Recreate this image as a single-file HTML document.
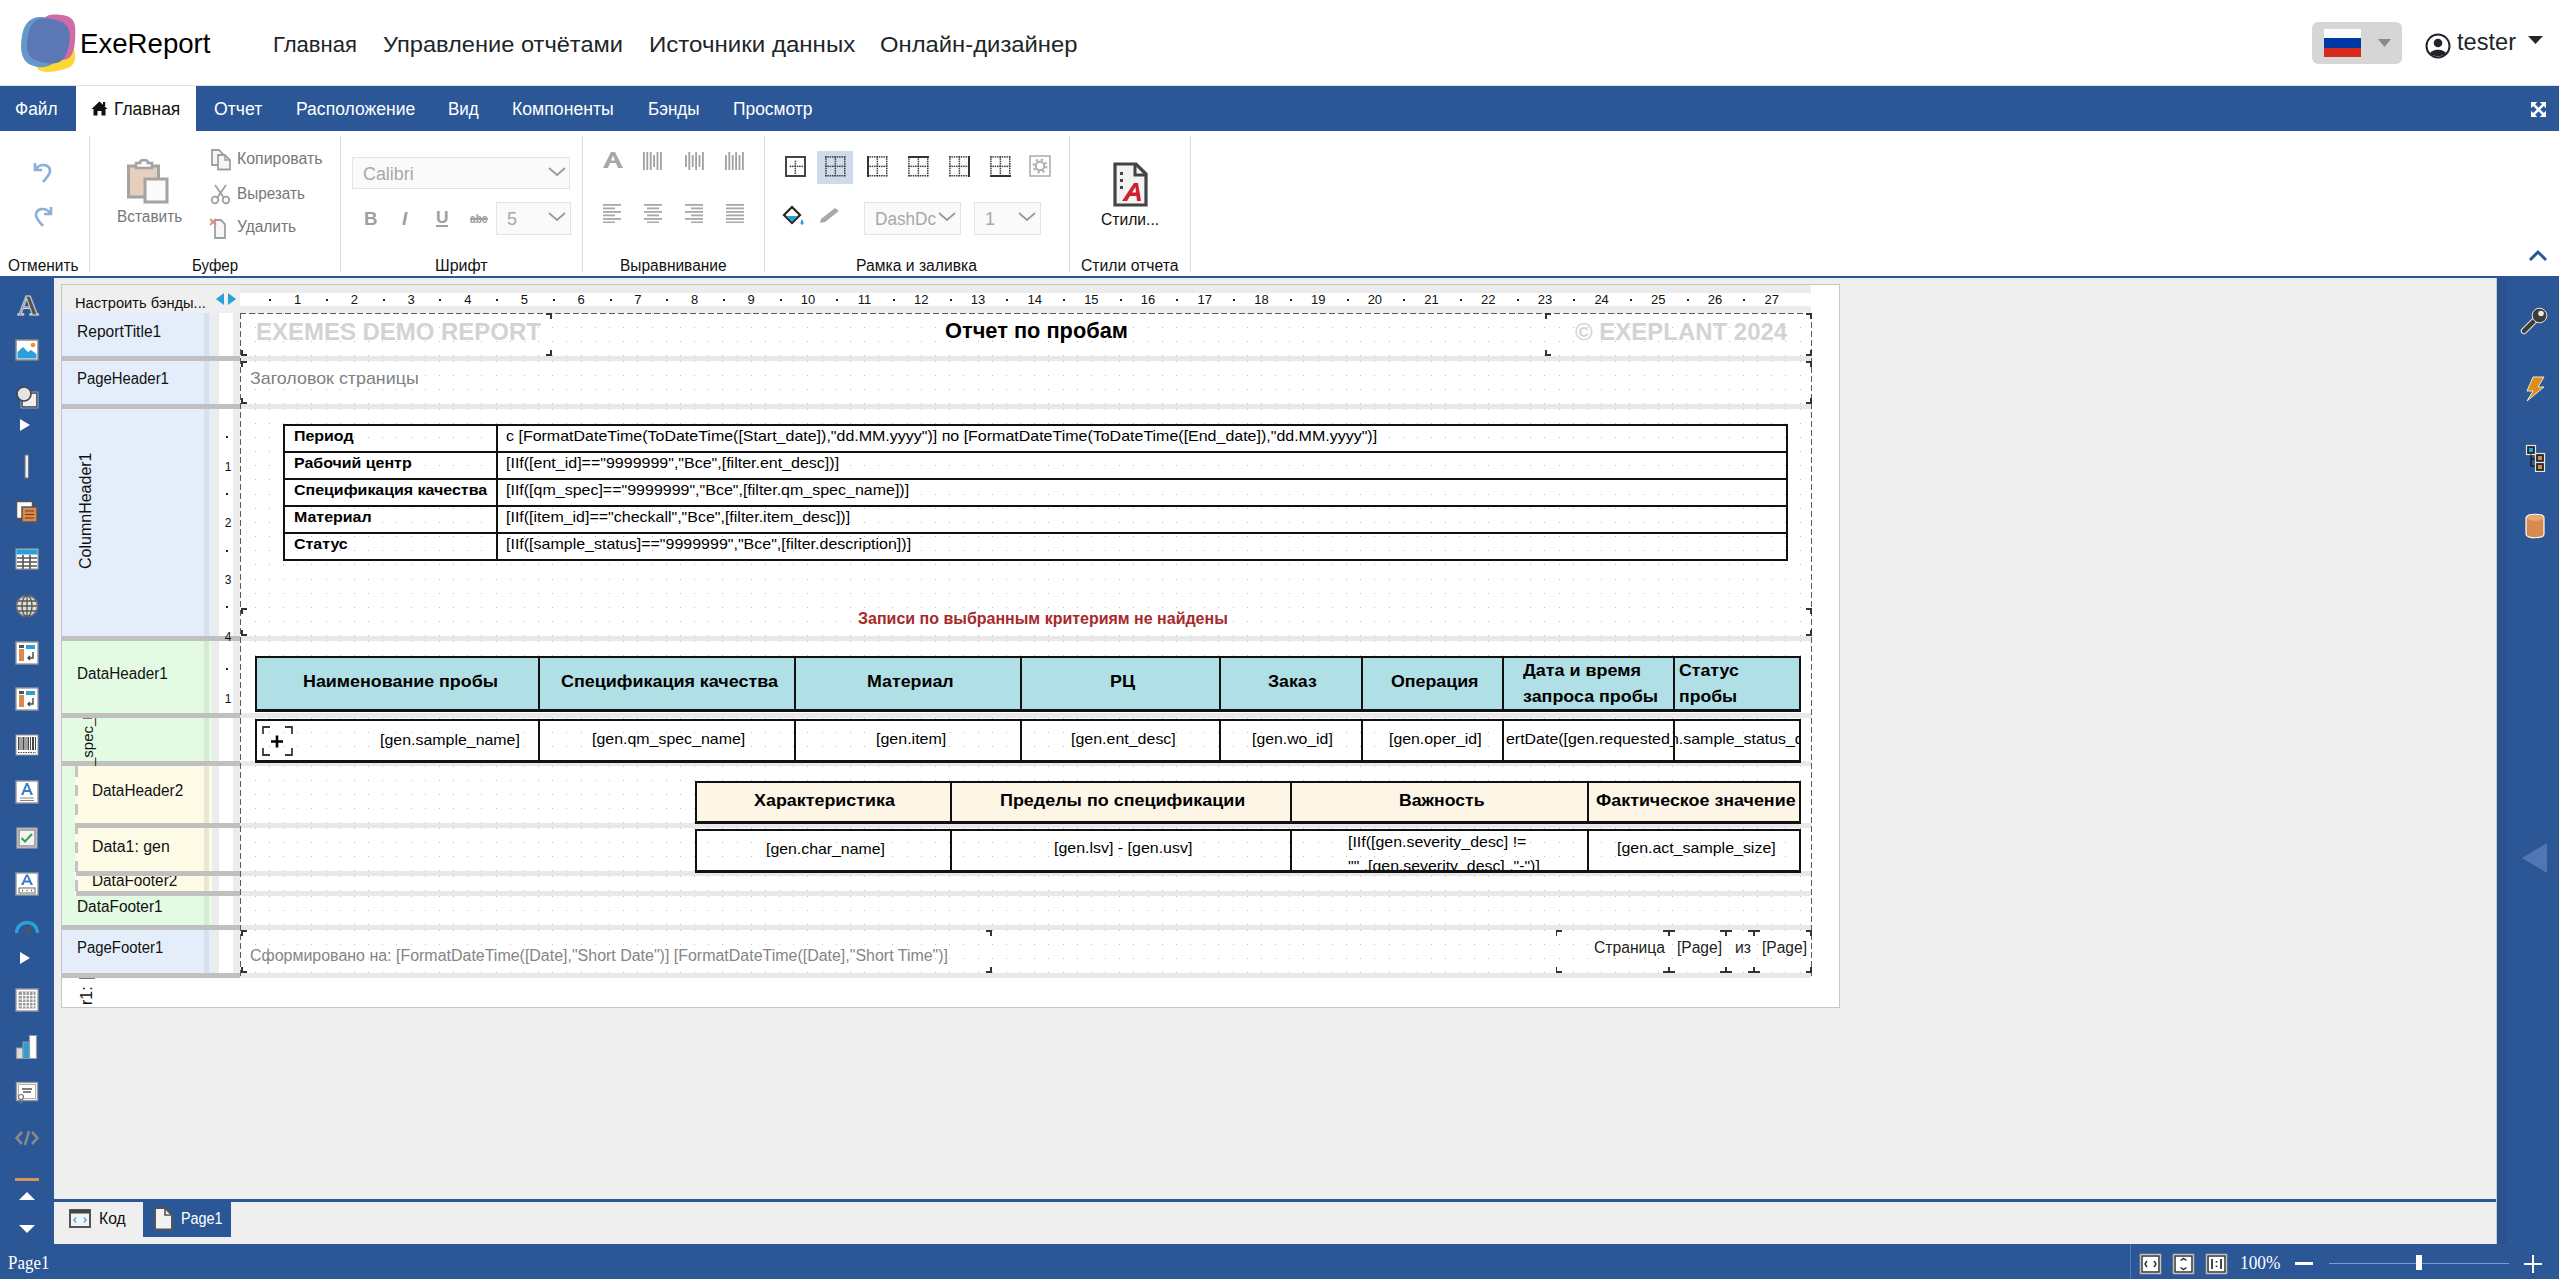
<!DOCTYPE html>
<html><head><meta charset="utf-8"><title>ExeReport</title>
<style>
html,body{margin:0;padding:0}
body{width:2559px;height:1279px;position:relative;overflow:hidden;background:#efefef;font-family:"Liberation Sans",sans-serif}
.t{position:absolute;white-space:nowrap;line-height:1;transform-origin:0 0;display:inline-block}
.rn{color:#111;font-family:"Liberation Sans",sans-serif}
</style></head><body>
<div style="position:absolute;left:0px;top:0px;width:2559px;height:85px;background:#fff"></div>
<div style="position:absolute;left:0px;top:85px;width:2559px;height:1px;background:#dee2e6"></div>
<svg style="position:absolute;left:15px;top:10px;" width="70" height="65" viewBox="0 0 70 65">
<g transform="rotate(-10 40 45)"><path d="M39.00 26.00 C55.80 26.00 60.00 29.50 60.00 43.50 C60.00 57.50 55.80 61.00 39.00 61.00 C22.20 61.00 18.00 57.50 18.00 43.50 C18.00 29.50 22.20 26.00 39.00 26.00Z" fill="#fdd835"/></g>
<g transform="rotate(4 40 30)"><path d="M42.00 4.50 C56.40 4.50 60.00 9.05 60.00 27.25 C60.00 45.45 56.40 50.00 42.00 50.00 C27.60 50.00 24.00 45.45 24.00 27.25 C24.00 9.05 27.60 4.50 42.00 4.50Z" fill="#d16ba5"/></g>
<path d="M41.00 26.00 C56.20 26.00 60.00 28.40 60.00 38.00 C60.00 47.60 56.20 50.00 41.00 50.00 C25.80 50.00 22.00 47.60 22.00 38.00 C22.00 28.40 25.80 26.00 41.00 26.00Z" fill="#d0677f" opacity="0"/>
<g transform="rotate(6 25 30)"><path d="M26.25 7.00 C39.68 7.00 46.00 15.00 46.00 32.00 C46.00 49.00 39.68 57.00 26.25 57.00 C12.82 57.00 6.50 49.00 6.50 32.00 C6.50 15.00 12.82 7.00 26.25 7.00Z" fill="#6497cb"/></g>
<g transform="rotate(10 33 30)"><path d="M33.50 8.50 C49.04 8.50 54.50 14.29 54.50 30.75 C54.50 47.22 49.04 53.00 33.50 53.00 C17.96 53.00 12.50 47.22 12.50 30.75 C12.50 14.29 17.96 8.50 33.50 8.50Z" fill="#5b77b4"/></g>
</svg>
<span id="t1" class="t" style="left:80px;top:29.90px;font-size:28px;color:#000;font-weight:400;font-family:'Liberation Sans', sans-serif;transform:scaleX(0.9864);">ExeReport</span>
<span id="t2" class="t" style="left:273px;top:34.38px;font-size:22px;color:#212529;font-weight:400;font-family:'Liberation Sans', sans-serif;transform:scaleX(1.0030);">Главная</span>
<span id="t3" class="t" style="left:382.5px;top:34.38px;font-size:22px;color:#212529;font-weight:400;font-family:'Liberation Sans', sans-serif;transform:scaleX(1.0742);">Управление отчётами</span>
<span id="t4" class="t" style="left:648.75px;top:34.38px;font-size:22px;color:#212529;font-weight:400;font-family:'Liberation Sans', sans-serif;transform:scaleX(1.0941);">Источники данных</span>
<span id="t5" class="t" style="left:880px;top:34.38px;font-size:22px;color:#212529;font-weight:400;font-family:'Liberation Sans', sans-serif;transform:scaleX(1.0824);">Онлайн-дизайнер</span>
<div style="position:absolute;left:2312px;top:22px;width:90px;height:42px;background:#d6d6d6;border-radius:6px"></div>
<div style="position:absolute;left:2324px;top:29px;width:37px;height:9px;background:#fff"></div>
<div style="position:absolute;left:2324px;top:38px;width:37px;height:10px;background:#0039a6"></div>
<div style="position:absolute;left:2324px;top:48px;width:37px;height:9px;background:#d52b1e"></div>
<svg style="position:absolute;left:2378px;top:39px;" width="14" height="9" viewBox="0 0 14 9"><path d="M0 0 L13 0 L6.5 8Z" fill="#8a8a8a"/></svg>
<svg style="position:absolute;left:2425px;top:33px;" width="26" height="26" viewBox="0 0 26 26"><circle cx="13" cy="13" r="11.5" fill="none" stroke="#212529" stroke-width="2"/><circle cx="13" cy="10" r="4.3" fill="#212529"/><path d="M5 20.5 C7 15.5 19 15.5 21 20.5 C18 24 8 24 5 20.5Z" fill="#212529"/></svg>
<span id="t6" class="t" style="left:2457.4px;top:30.18px;font-size:24px;color:#212529;font-weight:400;font-family:'Liberation Sans', sans-serif;transform:scaleX(0.9828);">tester</span>
<svg style="position:absolute;left:2528px;top:36px;" width="16" height="9" viewBox="0 0 16 9"><path d="M0 0 L15 0 L7.5 8Z" fill="#212529"/></svg>
<div style="position:absolute;left:0px;top:86px;width:2559px;height:45px;background:#2b5797"></div>
<div style="position:absolute;left:76px;top:86px;width:120px;height:45px;background:#fff"></div>
<span id="t7" class="t" style="left:15px;top:99.76px;font-size:18px;color:#fff;font-weight:400;font-family:'Liberation Sans', sans-serif;transform:scaleX(0.9601);">Файл</span>
<svg style="position:absolute;left:91px;top:101px;" width="17" height="15" viewBox="0 0 17 15"><path d="M8.5 0.5 L0.5 8 L2.5 8 L2.5 14.5 L6.5 14.5 L6.5 10 L10.5 10 L10.5 14.5 L14.5 14.5 L14.5 8 L16.5 8Z" fill="#111"/><rect x="12" y="1" width="2.2" height="4" fill="#111"/></svg>
<span id="t8" class="t" style="left:113.75px;top:99.76px;font-size:18px;color:#111;font-weight:400;font-family:'Liberation Sans', sans-serif;transform:scaleX(0.9669);">Главная</span>
<span id="t9" class="t" style="left:213.75px;top:99.76px;font-size:18px;color:#fff;font-weight:400;font-family:'Liberation Sans', sans-serif;transform:scaleX(0.9791);">Отчет</span>
<span id="t10" class="t" style="left:295.75px;top:99.76px;font-size:18px;color:#fff;font-weight:400;font-family:'Liberation Sans', sans-serif;transform:scaleX(0.9746);">Расположение</span>
<span id="t11" class="t" style="left:448px;top:99.76px;font-size:18px;color:#fff;font-weight:400;font-family:'Liberation Sans', sans-serif;transform:scaleX(0.9439);">Вид</span>
<span id="t12" class="t" style="left:512px;top:99.76px;font-size:18px;color:#fff;font-weight:400;font-family:'Liberation Sans', sans-serif;transform:scaleX(0.9812);">Компоненты</span>
<span id="t13" class="t" style="left:647.5px;top:99.76px;font-size:18px;color:#fff;font-weight:400;font-family:'Liberation Sans', sans-serif;transform:scaleX(0.9469);">Бэнды</span>
<span id="t14" class="t" style="left:732.5px;top:99.76px;font-size:18px;color:#fff;font-weight:400;font-family:'Liberation Sans', sans-serif;transform:scaleX(0.9669);">Просмотр</span>
<svg style="position:absolute;left:2531px;top:102px;" width="15" height="15" viewBox="0 0 15 15"><g fill="#fff"><path d="M0 0 L6.3 0 L0 6.3Z"/><path d="M15 0 L8.7 0 L15 6.3Z"/><path d="M0 15 L6.3 15 L0 8.7Z"/><path d="M15 15 L8.7 15 L15 8.7Z"/></g><path d="M2 2 L13 13 M13 2 L2 13" stroke="#fff" stroke-width="2.6"/></svg>
<div style="position:absolute;left:0px;top:131px;width:2559px;height:146px;background:#fff"></div>
<div style="position:absolute;left:0px;top:276px;width:2559px;height:2px;background:#2b5797"></div>
<div style="position:absolute;left:89px;top:136px;width:1px;height:136px;background:#dcdcdc"></div>
<div style="position:absolute;left:340px;top:136px;width:1px;height:136px;background:#dcdcdc"></div>
<div style="position:absolute;left:582px;top:136px;width:1px;height:136px;background:#dcdcdc"></div>
<div style="position:absolute;left:764px;top:136px;width:1px;height:136px;background:#dcdcdc"></div>
<div style="position:absolute;left:1069px;top:136px;width:1px;height:136px;background:#dcdcdc"></div>
<div style="position:absolute;left:1190px;top:136px;width:1px;height:136px;background:#dcdcdc"></div>
<span id="t15" class="t" style="left:7.5px;top:258.26px;font-size:16px;color:#111;font-weight:400;font-family:'Liberation Sans', sans-serif;transform:scaleX(0.9643);">Отменить</span>
<span id="t16" class="t" style="left:192px;top:258.26px;font-size:16px;color:#111;font-weight:400;font-family:'Liberation Sans', sans-serif;transform:scaleX(0.9400);">Буфер</span>
<span id="t17" class="t" style="left:435px;top:258.26px;font-size:16px;color:#111;font-weight:400;font-family:'Liberation Sans', sans-serif;transform:scaleX(1.0011);">Шрифт</span>
<span id="t18" class="t" style="left:620px;top:258.26px;font-size:16px;color:#111;font-weight:400;font-family:'Liberation Sans', sans-serif;transform:scaleX(0.9679);">Выравнивание</span>
<span id="t19" class="t" style="left:856px;top:258.26px;font-size:16px;color:#111;font-weight:400;font-family:'Liberation Sans', sans-serif;transform:scaleX(0.9807);">Рамка и заливка</span>
<span id="t20" class="t" style="left:1081px;top:258.26px;font-size:16px;color:#111;font-weight:400;font-family:'Liberation Sans', sans-serif;transform:scaleX(0.9831);">Стили отчета</span>
<svg style="position:absolute;left:2528px;top:249px;" width="20" height="14" viewBox="0 0 20 14"><path d="M2 11 L10 3 L18 11" fill="none" stroke="#2b5797" stroke-width="3"/></svg>
<svg style="position:absolute;left:32px;top:160px;" width="22" height="24" viewBox="0 0 22 24"><path d="M3 3 L3 10 L10 10" fill="none" stroke="#8ab0d6" stroke-width="2.6"/><path d="M4 9 C8 3 18 4 18 11 C18 15 14 18 11 22" fill="none" stroke="#8ab0d6" stroke-width="2.6"/></svg>
<svg style="position:absolute;left:32px;top:204px;" width="22" height="25" viewBox="0 0 22 25"><path d="M19 3 L19 10 L12 10" fill="none" stroke="#8ab0d6" stroke-width="2.6"/><path d="M18 9 C14 3 4 4 4 11 C4 15 8 18 11 22" fill="none" stroke="#8ab0d6" stroke-width="2.6"/></svg>
<svg style="position:absolute;left:126px;top:159px;" width="46" height="46" viewBox="0 0 46 46"><rect x="2.5" y="7" width="30" height="31" fill="#e6cfbd" stroke="#a3a3a3" stroke-width="3"/>
<path d="M10 9 L10 4 L14 4 C14 0 22 0 22 4 L26 4 L26 9Z" fill="#fafafa" stroke="#a3a3a3" stroke-width="2.5"/>
<rect x="19" y="20" width="22" height="23" fill="#fafafa" stroke="#a3a3a3" stroke-width="3"/></svg>
<span id="t21" class="t" style="left:116.5px;top:209.06px;font-size:16px;color:#777;font-weight:400;font-family:'Liberation Sans', sans-serif;transform:scaleX(0.9613);">Вставить</span>
<svg style="position:absolute;left:210px;top:148px;" width="24" height="24" viewBox="0 0 24 24"><path d="M2 2 L9 2 L13 6 L13 17 L2 17Z" fill="#f6f6f6" stroke="#a0a0a0" stroke-width="1.8"/><path d="M8 7 L15 7 L20 12 L20 21.5 L8 21.5Z" fill="#f6f6f6" stroke="#a0a0a0" stroke-width="1.8"/><path d="M15 7 L15 12 L20 12" fill="none" stroke="#a0a0a0" stroke-width="1.6"/></svg>
<span id="t22" class="t" style="left:236.8px;top:151.46px;font-size:16px;color:#777;font-weight:400;font-family:'Liberation Sans', sans-serif;transform:scaleX(0.9935);">Копировать</span>
<svg style="position:absolute;left:210px;top:183px;" width="22" height="22" viewBox="0 0 22 22"><path d="M5 2 L14 15 M16 2 L7 15" stroke="#a0a0a0" stroke-width="1.8" fill="none"/><circle cx="5" cy="17" r="3.3" fill="none" stroke="#a0a0a0" stroke-width="1.8"/><circle cx="16" cy="17" r="3.3" fill="none" stroke="#a0a0a0" stroke-width="1.8"/></svg>
<span id="t23" class="t" style="left:236.8px;top:185.66px;font-size:16px;color:#777;font-weight:400;font-family:'Liberation Sans', sans-serif;transform:scaleX(0.9554);">Вырезать</span>
<svg style="position:absolute;left:208px;top:217px;" width="24" height="24" viewBox="0 0 24 24"><path d="M7 3 L13 3 L17 7 L17 21 L7 21Z" fill="#f6f6f6" stroke="#a0a0a0" stroke-width="1.8"/><path d="M2 2 L8 8 M8 2 L2 8" stroke="#d98c84" stroke-width="1.8"/></svg>
<span id="t24" class="t" style="left:236.8px;top:219.46px;font-size:16px;color:#777;font-weight:400;font-family:'Liberation Sans', sans-serif;transform:scaleX(0.9690);">Удалить</span>
<div style="position:absolute;left:352px;top:157px;width:218px;height:32px;background:#fafafa;border:1px solid #e3e3e3;box-sizing:border-box"></div>
<span id="t25" class="t" style="left:363.4px;top:165.16px;font-size:18px;color:#a8a8a8;font-weight:400;font-family:'Liberation Sans', sans-serif;transform:scaleX(0.9919);">Calibri</span>
<svg style="position:absolute;left:548px;top:166px;" width="18" height="12" viewBox="0 0 18 12"><path d="M1 2 L9 9 L17 2" fill="none" stroke="#9a9a9a" stroke-width="1.8"/></svg>
<div style="position:absolute;left:496px;top:202px;width:75px;height:33px;background:#fafafa;border:1px solid #e3e3e3;box-sizing:border-box"></div>
<span id="t26" class="t" style="left:507px;top:210.26px;font-size:18px;color:#a8a8a8;font-weight:400;font-family:'Liberation Sans', sans-serif;">5</span>
<svg style="position:absolute;left:548px;top:211px;" width="18" height="12" viewBox="0 0 18 12"><path d="M1 2 L9 9 L17 2" fill="none" stroke="#9a9a9a" stroke-width="1.8"/></svg>
<span id="t27" class="t" style="left:363.5px;top:208.92px;font-size:19px;color:#a0a0a0;font-weight:700;font-family:'Liberation Sans', sans-serif;transform:scaleX(0.9829);letter-spacing:0">B</span>
<span id="t28" class="t" style="left:402px;top:208.92px;font-size:19px;color:#a0a0a0;font-weight:700;font-family:'Liberation Sans', sans-serif;font-style:italic">I</span>
<span id="t29" class="t" style="left:435.5px;top:208.61px;font-size:17px;color:#a0a0a0;font-weight:700;font-family:'Liberation Sans', sans-serif;transform:scaleX(1.0178);">U</span>
<div style="position:absolute;left:435.5px;top:225px;width:12px;height:2px;background:#a0a0a0"></div>
<span id="t30" class="t" style="left:470px;top:212.84px;font-size:12px;color:#a0a0a0;font-weight:700;font-family:'Liberation Sans', sans-serif;transform:scaleX(0.8459);">abc</span>
<div style="position:absolute;left:470px;top:218px;width:18px;height:1.5px;background:#a0a0a0"></div>
<svg style="position:absolute;left:602px;top:151px;" width="22" height="18" viewBox="0 0 22 18"><path d="M1 17 L9 1 L13 1 L21 17 L16 17 L14 12 L8 12 L6 17Z M9 9.5 L13 9.5 L11 4.5Z" fill="#a8a8a8"/></svg>
<svg style="position:absolute;left:643px;top:152px;" width="19" height="19" viewBox="0 0 19 19"><rect x="0.0" y="0" width="1.8" height="18" fill="#a0a0a0"/><rect x="3.4" y="0" width="1.8" height="18" fill="#a0a0a0"/><rect x="6.8" y="0" width="1.8" height="18" fill="#a0a0a0"/><rect x="10.2" y="3" width="1.8" height="12" fill="#a0a0a0"/><rect x="13.6" y="0" width="1.8" height="18" fill="#a0a0a0"/><rect x="17.0" y="0" width="1.8" height="18" fill="#a0a0a0"/></svg>
<svg style="position:absolute;left:685px;top:152px;" width="19" height="19" viewBox="0 0 19 19"><rect x="0.0" y="3" width="1.8" height="12" fill="#a0a0a0"/><rect x="3.4" y="0" width="1.8" height="18" fill="#a0a0a0"/><rect x="6.8" y="3" width="1.8" height="12" fill="#a0a0a0"/><rect x="10.2" y="0" width="1.8" height="18" fill="#a0a0a0"/><rect x="13.6" y="3" width="1.8" height="12" fill="#a0a0a0"/><rect x="17.0" y="0" width="1.8" height="18" fill="#a0a0a0"/></svg>
<svg style="position:absolute;left:725px;top:152px;" width="19" height="19" viewBox="0 0 19 19"><rect x="0.0" y="3" width="1.8" height="15" fill="#a0a0a0"/><rect x="3.4" y="0" width="1.8" height="18" fill="#a0a0a0"/><rect x="6.8" y="3" width="1.8" height="15" fill="#a0a0a0"/><rect x="10.2" y="0" width="1.8" height="18" fill="#a0a0a0"/><rect x="13.6" y="3" width="1.8" height="15" fill="#a0a0a0"/><rect x="17.0" y="0" width="1.8" height="18" fill="#a0a0a0"/></svg>
<svg style="position:absolute;left:603px;top:204px;" width="19" height="19" viewBox="0 0 19 19"><rect x="0" y="0.0" width="18" height="1.8" fill="#a8a8a8"/><rect x="0" y="3.5" width="12" height="1.8" fill="#a8a8a8"/><rect x="0" y="7.0" width="18" height="1.8" fill="#a8a8a8"/><rect x="0" y="10.5" width="12" height="1.8" fill="#a8a8a8"/><rect x="0" y="14.0" width="18" height="1.8" fill="#a8a8a8"/><rect x="0" y="17.5" width="12" height="1.8" fill="#a8a8a8"/></svg>
<svg style="position:absolute;left:644px;top:204px;" width="19" height="19" viewBox="0 0 19 19"><rect x="0" y="0.0" width="18" height="1.8" fill="#a8a8a8"/><rect x="3" y="3.5" width="12" height="1.8" fill="#a8a8a8"/><rect x="0" y="7.0" width="18" height="1.8" fill="#a8a8a8"/><rect x="3" y="10.5" width="12" height="1.8" fill="#a8a8a8"/><rect x="0" y="14.0" width="18" height="1.8" fill="#a8a8a8"/><rect x="3" y="17.5" width="12" height="1.8" fill="#a8a8a8"/></svg>
<svg style="position:absolute;left:685px;top:204px;" width="19" height="19" viewBox="0 0 19 19"><rect x="0" y="0.0" width="18" height="1.8" fill="#a8a8a8"/><rect x="6" y="3.5" width="12" height="1.8" fill="#a8a8a8"/><rect x="0" y="7.0" width="18" height="1.8" fill="#a8a8a8"/><rect x="6" y="10.5" width="12" height="1.8" fill="#a8a8a8"/><rect x="0" y="14.0" width="18" height="1.8" fill="#a8a8a8"/><rect x="6" y="17.5" width="12" height="1.8" fill="#a8a8a8"/></svg>
<svg style="position:absolute;left:726px;top:204px;" width="19" height="19" viewBox="0 0 19 19"><rect x="0" y="0.0" width="18" height="1.8" fill="#a8a8a8"/><rect x="0" y="3.5" width="18" height="1.8" fill="#a8a8a8"/><rect x="0" y="7.0" width="18" height="1.8" fill="#a8a8a8"/><rect x="0" y="10.5" width="18" height="1.8" fill="#a8a8a8"/><rect x="0" y="14.0" width="18" height="1.8" fill="#a8a8a8"/><rect x="0" y="17.5" width="18" height="1.8" fill="#a8a8a8"/></svg>
<div style="position:absolute;left:817px;top:151px;width:36px;height:33px;background:#cfdaea"></div>
<svg style="position:absolute;left:784.5px;top:156px;" width="21" height="21" viewBox="0 0 21 21"><rect x="1" y="1" width="19" height="19" fill="none" stroke="#444" stroke-width="2"/><rect x="4.70" y="9.6" width="1.5" height="1.5" fill="#3a3a3a"/><rect x="9.6" y="4.70" width="1.5" height="1.5" fill="#3a3a3a"/><rect x="7.05" y="9.6" width="1.5" height="1.5" fill="#3a3a3a"/><rect x="9.6" y="7.05" width="1.5" height="1.5" fill="#3a3a3a"/><rect x="9.40" y="9.6" width="1.5" height="1.5" fill="#3a3a3a"/><rect x="9.6" y="9.40" width="1.5" height="1.5" fill="#3a3a3a"/><rect x="11.75" y="9.6" width="1.5" height="1.5" fill="#3a3a3a"/><rect x="9.6" y="11.75" width="1.5" height="1.5" fill="#3a3a3a"/><rect x="14.10" y="9.6" width="1.5" height="1.5" fill="#3a3a3a"/><rect x="9.6" y="14.10" width="1.5" height="1.5" fill="#3a3a3a"/><rect x="16.45" y="9.6" width="1.5" height="1.5" fill="#3a3a3a"/><rect x="9.6" y="16.45" width="1.5" height="1.5" fill="#3a3a3a"/></svg>
<svg style="position:absolute;left:824.5px;top:156px;" width="21" height="21" viewBox="0 0 21 21"><rect x="0.00" y="0.20" width="1.5" height="1.5" fill="#3a3a3a"/><rect x="0.20" y="0.00" width="1.5" height="1.5" fill="#3a3a3a"/><rect x="0.00" y="9.60" width="1.5" height="1.5" fill="#3a3a3a"/><rect x="9.60" y="0.00" width="1.5" height="1.5" fill="#3a3a3a"/><rect x="0.00" y="19.00" width="1.5" height="1.5" fill="#3a3a3a"/><rect x="19.00" y="0.00" width="1.5" height="1.5" fill="#3a3a3a"/><rect x="2.35" y="0.20" width="1.5" height="1.5" fill="#3a3a3a"/><rect x="0.20" y="2.35" width="1.5" height="1.5" fill="#3a3a3a"/><rect x="2.35" y="9.60" width="1.5" height="1.5" fill="#3a3a3a"/><rect x="9.60" y="2.35" width="1.5" height="1.5" fill="#3a3a3a"/><rect x="2.35" y="19.00" width="1.5" height="1.5" fill="#3a3a3a"/><rect x="19.00" y="2.35" width="1.5" height="1.5" fill="#3a3a3a"/><rect x="4.70" y="0.20" width="1.5" height="1.5" fill="#3a3a3a"/><rect x="0.20" y="4.70" width="1.5" height="1.5" fill="#3a3a3a"/><rect x="4.70" y="9.60" width="1.5" height="1.5" fill="#3a3a3a"/><rect x="9.60" y="4.70" width="1.5" height="1.5" fill="#3a3a3a"/><rect x="4.70" y="19.00" width="1.5" height="1.5" fill="#3a3a3a"/><rect x="19.00" y="4.70" width="1.5" height="1.5" fill="#3a3a3a"/><rect x="7.05" y="0.20" width="1.5" height="1.5" fill="#3a3a3a"/><rect x="0.20" y="7.05" width="1.5" height="1.5" fill="#3a3a3a"/><rect x="7.05" y="9.60" width="1.5" height="1.5" fill="#3a3a3a"/><rect x="9.60" y="7.05" width="1.5" height="1.5" fill="#3a3a3a"/><rect x="7.05" y="19.00" width="1.5" height="1.5" fill="#3a3a3a"/><rect x="19.00" y="7.05" width="1.5" height="1.5" fill="#3a3a3a"/><rect x="9.40" y="0.20" width="1.5" height="1.5" fill="#3a3a3a"/><rect x="0.20" y="9.40" width="1.5" height="1.5" fill="#3a3a3a"/><rect x="9.40" y="9.60" width="1.5" height="1.5" fill="#3a3a3a"/><rect x="9.60" y="9.40" width="1.5" height="1.5" fill="#3a3a3a"/><rect x="9.40" y="19.00" width="1.5" height="1.5" fill="#3a3a3a"/><rect x="19.00" y="9.40" width="1.5" height="1.5" fill="#3a3a3a"/><rect x="11.75" y="0.20" width="1.5" height="1.5" fill="#3a3a3a"/><rect x="0.20" y="11.75" width="1.5" height="1.5" fill="#3a3a3a"/><rect x="11.75" y="9.60" width="1.5" height="1.5" fill="#3a3a3a"/><rect x="9.60" y="11.75" width="1.5" height="1.5" fill="#3a3a3a"/><rect x="11.75" y="19.00" width="1.5" height="1.5" fill="#3a3a3a"/><rect x="19.00" y="11.75" width="1.5" height="1.5" fill="#3a3a3a"/><rect x="14.10" y="0.20" width="1.5" height="1.5" fill="#3a3a3a"/><rect x="0.20" y="14.10" width="1.5" height="1.5" fill="#3a3a3a"/><rect x="14.10" y="9.60" width="1.5" height="1.5" fill="#3a3a3a"/><rect x="9.60" y="14.10" width="1.5" height="1.5" fill="#3a3a3a"/><rect x="14.10" y="19.00" width="1.5" height="1.5" fill="#3a3a3a"/><rect x="19.00" y="14.10" width="1.5" height="1.5" fill="#3a3a3a"/><rect x="16.45" y="0.20" width="1.5" height="1.5" fill="#3a3a3a"/><rect x="0.20" y="16.45" width="1.5" height="1.5" fill="#3a3a3a"/><rect x="16.45" y="9.60" width="1.5" height="1.5" fill="#3a3a3a"/><rect x="9.60" y="16.45" width="1.5" height="1.5" fill="#3a3a3a"/><rect x="16.45" y="19.00" width="1.5" height="1.5" fill="#3a3a3a"/><rect x="19.00" y="16.45" width="1.5" height="1.5" fill="#3a3a3a"/><rect x="18.80" y="0.20" width="1.5" height="1.5" fill="#3a3a3a"/><rect x="0.20" y="18.80" width="1.5" height="1.5" fill="#3a3a3a"/><rect x="18.80" y="9.60" width="1.5" height="1.5" fill="#3a3a3a"/><rect x="9.60" y="18.80" width="1.5" height="1.5" fill="#3a3a3a"/><rect x="18.80" y="19.00" width="1.5" height="1.5" fill="#3a3a3a"/><rect x="19.00" y="18.80" width="1.5" height="1.5" fill="#3a3a3a"/></svg>
<svg style="position:absolute;left:866.5px;top:156px;" width="21" height="21" viewBox="0 0 21 21"><rect x="0.00" y="0.20" width="1.5" height="1.5" fill="#3a3a3a"/><rect x="0.20" y="0.00" width="1.5" height="1.5" fill="#3a3a3a"/><rect x="0.00" y="9.60" width="1.5" height="1.5" fill="#3a3a3a"/><rect x="9.60" y="0.00" width="1.5" height="1.5" fill="#3a3a3a"/><rect x="0.00" y="19.00" width="1.5" height="1.5" fill="#3a3a3a"/><rect x="19.00" y="0.00" width="1.5" height="1.5" fill="#3a3a3a"/><rect x="2.35" y="0.20" width="1.5" height="1.5" fill="#3a3a3a"/><rect x="0.20" y="2.35" width="1.5" height="1.5" fill="#3a3a3a"/><rect x="2.35" y="9.60" width="1.5" height="1.5" fill="#3a3a3a"/><rect x="9.60" y="2.35" width="1.5" height="1.5" fill="#3a3a3a"/><rect x="2.35" y="19.00" width="1.5" height="1.5" fill="#3a3a3a"/><rect x="19.00" y="2.35" width="1.5" height="1.5" fill="#3a3a3a"/><rect x="4.70" y="0.20" width="1.5" height="1.5" fill="#3a3a3a"/><rect x="0.20" y="4.70" width="1.5" height="1.5" fill="#3a3a3a"/><rect x="4.70" y="9.60" width="1.5" height="1.5" fill="#3a3a3a"/><rect x="9.60" y="4.70" width="1.5" height="1.5" fill="#3a3a3a"/><rect x="4.70" y="19.00" width="1.5" height="1.5" fill="#3a3a3a"/><rect x="19.00" y="4.70" width="1.5" height="1.5" fill="#3a3a3a"/><rect x="7.05" y="0.20" width="1.5" height="1.5" fill="#3a3a3a"/><rect x="0.20" y="7.05" width="1.5" height="1.5" fill="#3a3a3a"/><rect x="7.05" y="9.60" width="1.5" height="1.5" fill="#3a3a3a"/><rect x="9.60" y="7.05" width="1.5" height="1.5" fill="#3a3a3a"/><rect x="7.05" y="19.00" width="1.5" height="1.5" fill="#3a3a3a"/><rect x="19.00" y="7.05" width="1.5" height="1.5" fill="#3a3a3a"/><rect x="9.40" y="0.20" width="1.5" height="1.5" fill="#3a3a3a"/><rect x="0.20" y="9.40" width="1.5" height="1.5" fill="#3a3a3a"/><rect x="9.40" y="9.60" width="1.5" height="1.5" fill="#3a3a3a"/><rect x="9.60" y="9.40" width="1.5" height="1.5" fill="#3a3a3a"/><rect x="9.40" y="19.00" width="1.5" height="1.5" fill="#3a3a3a"/><rect x="19.00" y="9.40" width="1.5" height="1.5" fill="#3a3a3a"/><rect x="11.75" y="0.20" width="1.5" height="1.5" fill="#3a3a3a"/><rect x="0.20" y="11.75" width="1.5" height="1.5" fill="#3a3a3a"/><rect x="11.75" y="9.60" width="1.5" height="1.5" fill="#3a3a3a"/><rect x="9.60" y="11.75" width="1.5" height="1.5" fill="#3a3a3a"/><rect x="11.75" y="19.00" width="1.5" height="1.5" fill="#3a3a3a"/><rect x="19.00" y="11.75" width="1.5" height="1.5" fill="#3a3a3a"/><rect x="14.10" y="0.20" width="1.5" height="1.5" fill="#3a3a3a"/><rect x="0.20" y="14.10" width="1.5" height="1.5" fill="#3a3a3a"/><rect x="14.10" y="9.60" width="1.5" height="1.5" fill="#3a3a3a"/><rect x="9.60" y="14.10" width="1.5" height="1.5" fill="#3a3a3a"/><rect x="14.10" y="19.00" width="1.5" height="1.5" fill="#3a3a3a"/><rect x="19.00" y="14.10" width="1.5" height="1.5" fill="#3a3a3a"/><rect x="16.45" y="0.20" width="1.5" height="1.5" fill="#3a3a3a"/><rect x="0.20" y="16.45" width="1.5" height="1.5" fill="#3a3a3a"/><rect x="16.45" y="9.60" width="1.5" height="1.5" fill="#3a3a3a"/><rect x="9.60" y="16.45" width="1.5" height="1.5" fill="#3a3a3a"/><rect x="16.45" y="19.00" width="1.5" height="1.5" fill="#3a3a3a"/><rect x="19.00" y="16.45" width="1.5" height="1.5" fill="#3a3a3a"/><rect x="18.80" y="0.20" width="1.5" height="1.5" fill="#3a3a3a"/><rect x="0.20" y="18.80" width="1.5" height="1.5" fill="#3a3a3a"/><rect x="18.80" y="9.60" width="1.5" height="1.5" fill="#3a3a3a"/><rect x="9.60" y="18.80" width="1.5" height="1.5" fill="#3a3a3a"/><rect x="18.80" y="19.00" width="1.5" height="1.5" fill="#3a3a3a"/><rect x="19.00" y="18.80" width="1.5" height="1.5" fill="#3a3a3a"/><rect x="0" y="0" width="2" height="21" fill="#333"/></svg>
<svg style="position:absolute;left:907.5px;top:156px;" width="21" height="21" viewBox="0 0 21 21"><rect x="0.00" y="0.20" width="1.5" height="1.5" fill="#3a3a3a"/><rect x="0.20" y="0.00" width="1.5" height="1.5" fill="#3a3a3a"/><rect x="0.00" y="9.60" width="1.5" height="1.5" fill="#3a3a3a"/><rect x="9.60" y="0.00" width="1.5" height="1.5" fill="#3a3a3a"/><rect x="0.00" y="19.00" width="1.5" height="1.5" fill="#3a3a3a"/><rect x="19.00" y="0.00" width="1.5" height="1.5" fill="#3a3a3a"/><rect x="2.35" y="0.20" width="1.5" height="1.5" fill="#3a3a3a"/><rect x="0.20" y="2.35" width="1.5" height="1.5" fill="#3a3a3a"/><rect x="2.35" y="9.60" width="1.5" height="1.5" fill="#3a3a3a"/><rect x="9.60" y="2.35" width="1.5" height="1.5" fill="#3a3a3a"/><rect x="2.35" y="19.00" width="1.5" height="1.5" fill="#3a3a3a"/><rect x="19.00" y="2.35" width="1.5" height="1.5" fill="#3a3a3a"/><rect x="4.70" y="0.20" width="1.5" height="1.5" fill="#3a3a3a"/><rect x="0.20" y="4.70" width="1.5" height="1.5" fill="#3a3a3a"/><rect x="4.70" y="9.60" width="1.5" height="1.5" fill="#3a3a3a"/><rect x="9.60" y="4.70" width="1.5" height="1.5" fill="#3a3a3a"/><rect x="4.70" y="19.00" width="1.5" height="1.5" fill="#3a3a3a"/><rect x="19.00" y="4.70" width="1.5" height="1.5" fill="#3a3a3a"/><rect x="7.05" y="0.20" width="1.5" height="1.5" fill="#3a3a3a"/><rect x="0.20" y="7.05" width="1.5" height="1.5" fill="#3a3a3a"/><rect x="7.05" y="9.60" width="1.5" height="1.5" fill="#3a3a3a"/><rect x="9.60" y="7.05" width="1.5" height="1.5" fill="#3a3a3a"/><rect x="7.05" y="19.00" width="1.5" height="1.5" fill="#3a3a3a"/><rect x="19.00" y="7.05" width="1.5" height="1.5" fill="#3a3a3a"/><rect x="9.40" y="0.20" width="1.5" height="1.5" fill="#3a3a3a"/><rect x="0.20" y="9.40" width="1.5" height="1.5" fill="#3a3a3a"/><rect x="9.40" y="9.60" width="1.5" height="1.5" fill="#3a3a3a"/><rect x="9.60" y="9.40" width="1.5" height="1.5" fill="#3a3a3a"/><rect x="9.40" y="19.00" width="1.5" height="1.5" fill="#3a3a3a"/><rect x="19.00" y="9.40" width="1.5" height="1.5" fill="#3a3a3a"/><rect x="11.75" y="0.20" width="1.5" height="1.5" fill="#3a3a3a"/><rect x="0.20" y="11.75" width="1.5" height="1.5" fill="#3a3a3a"/><rect x="11.75" y="9.60" width="1.5" height="1.5" fill="#3a3a3a"/><rect x="9.60" y="11.75" width="1.5" height="1.5" fill="#3a3a3a"/><rect x="11.75" y="19.00" width="1.5" height="1.5" fill="#3a3a3a"/><rect x="19.00" y="11.75" width="1.5" height="1.5" fill="#3a3a3a"/><rect x="14.10" y="0.20" width="1.5" height="1.5" fill="#3a3a3a"/><rect x="0.20" y="14.10" width="1.5" height="1.5" fill="#3a3a3a"/><rect x="14.10" y="9.60" width="1.5" height="1.5" fill="#3a3a3a"/><rect x="9.60" y="14.10" width="1.5" height="1.5" fill="#3a3a3a"/><rect x="14.10" y="19.00" width="1.5" height="1.5" fill="#3a3a3a"/><rect x="19.00" y="14.10" width="1.5" height="1.5" fill="#3a3a3a"/><rect x="16.45" y="0.20" width="1.5" height="1.5" fill="#3a3a3a"/><rect x="0.20" y="16.45" width="1.5" height="1.5" fill="#3a3a3a"/><rect x="16.45" y="9.60" width="1.5" height="1.5" fill="#3a3a3a"/><rect x="9.60" y="16.45" width="1.5" height="1.5" fill="#3a3a3a"/><rect x="16.45" y="19.00" width="1.5" height="1.5" fill="#3a3a3a"/><rect x="19.00" y="16.45" width="1.5" height="1.5" fill="#3a3a3a"/><rect x="18.80" y="0.20" width="1.5" height="1.5" fill="#3a3a3a"/><rect x="0.20" y="18.80" width="1.5" height="1.5" fill="#3a3a3a"/><rect x="18.80" y="9.60" width="1.5" height="1.5" fill="#3a3a3a"/><rect x="9.60" y="18.80" width="1.5" height="1.5" fill="#3a3a3a"/><rect x="18.80" y="19.00" width="1.5" height="1.5" fill="#3a3a3a"/><rect x="19.00" y="18.80" width="1.5" height="1.5" fill="#3a3a3a"/><rect x="0" y="0" width="21" height="2" fill="#333"/></svg>
<svg style="position:absolute;left:948.5px;top:156px;" width="21" height="21" viewBox="0 0 21 21"><rect x="0.00" y="0.20" width="1.5" height="1.5" fill="#3a3a3a"/><rect x="0.20" y="0.00" width="1.5" height="1.5" fill="#3a3a3a"/><rect x="0.00" y="9.60" width="1.5" height="1.5" fill="#3a3a3a"/><rect x="9.60" y="0.00" width="1.5" height="1.5" fill="#3a3a3a"/><rect x="0.00" y="19.00" width="1.5" height="1.5" fill="#3a3a3a"/><rect x="19.00" y="0.00" width="1.5" height="1.5" fill="#3a3a3a"/><rect x="2.35" y="0.20" width="1.5" height="1.5" fill="#3a3a3a"/><rect x="0.20" y="2.35" width="1.5" height="1.5" fill="#3a3a3a"/><rect x="2.35" y="9.60" width="1.5" height="1.5" fill="#3a3a3a"/><rect x="9.60" y="2.35" width="1.5" height="1.5" fill="#3a3a3a"/><rect x="2.35" y="19.00" width="1.5" height="1.5" fill="#3a3a3a"/><rect x="19.00" y="2.35" width="1.5" height="1.5" fill="#3a3a3a"/><rect x="4.70" y="0.20" width="1.5" height="1.5" fill="#3a3a3a"/><rect x="0.20" y="4.70" width="1.5" height="1.5" fill="#3a3a3a"/><rect x="4.70" y="9.60" width="1.5" height="1.5" fill="#3a3a3a"/><rect x="9.60" y="4.70" width="1.5" height="1.5" fill="#3a3a3a"/><rect x="4.70" y="19.00" width="1.5" height="1.5" fill="#3a3a3a"/><rect x="19.00" y="4.70" width="1.5" height="1.5" fill="#3a3a3a"/><rect x="7.05" y="0.20" width="1.5" height="1.5" fill="#3a3a3a"/><rect x="0.20" y="7.05" width="1.5" height="1.5" fill="#3a3a3a"/><rect x="7.05" y="9.60" width="1.5" height="1.5" fill="#3a3a3a"/><rect x="9.60" y="7.05" width="1.5" height="1.5" fill="#3a3a3a"/><rect x="7.05" y="19.00" width="1.5" height="1.5" fill="#3a3a3a"/><rect x="19.00" y="7.05" width="1.5" height="1.5" fill="#3a3a3a"/><rect x="9.40" y="0.20" width="1.5" height="1.5" fill="#3a3a3a"/><rect x="0.20" y="9.40" width="1.5" height="1.5" fill="#3a3a3a"/><rect x="9.40" y="9.60" width="1.5" height="1.5" fill="#3a3a3a"/><rect x="9.60" y="9.40" width="1.5" height="1.5" fill="#3a3a3a"/><rect x="9.40" y="19.00" width="1.5" height="1.5" fill="#3a3a3a"/><rect x="19.00" y="9.40" width="1.5" height="1.5" fill="#3a3a3a"/><rect x="11.75" y="0.20" width="1.5" height="1.5" fill="#3a3a3a"/><rect x="0.20" y="11.75" width="1.5" height="1.5" fill="#3a3a3a"/><rect x="11.75" y="9.60" width="1.5" height="1.5" fill="#3a3a3a"/><rect x="9.60" y="11.75" width="1.5" height="1.5" fill="#3a3a3a"/><rect x="11.75" y="19.00" width="1.5" height="1.5" fill="#3a3a3a"/><rect x="19.00" y="11.75" width="1.5" height="1.5" fill="#3a3a3a"/><rect x="14.10" y="0.20" width="1.5" height="1.5" fill="#3a3a3a"/><rect x="0.20" y="14.10" width="1.5" height="1.5" fill="#3a3a3a"/><rect x="14.10" y="9.60" width="1.5" height="1.5" fill="#3a3a3a"/><rect x="9.60" y="14.10" width="1.5" height="1.5" fill="#3a3a3a"/><rect x="14.10" y="19.00" width="1.5" height="1.5" fill="#3a3a3a"/><rect x="19.00" y="14.10" width="1.5" height="1.5" fill="#3a3a3a"/><rect x="16.45" y="0.20" width="1.5" height="1.5" fill="#3a3a3a"/><rect x="0.20" y="16.45" width="1.5" height="1.5" fill="#3a3a3a"/><rect x="16.45" y="9.60" width="1.5" height="1.5" fill="#3a3a3a"/><rect x="9.60" y="16.45" width="1.5" height="1.5" fill="#3a3a3a"/><rect x="16.45" y="19.00" width="1.5" height="1.5" fill="#3a3a3a"/><rect x="19.00" y="16.45" width="1.5" height="1.5" fill="#3a3a3a"/><rect x="18.80" y="0.20" width="1.5" height="1.5" fill="#3a3a3a"/><rect x="0.20" y="18.80" width="1.5" height="1.5" fill="#3a3a3a"/><rect x="18.80" y="9.60" width="1.5" height="1.5" fill="#3a3a3a"/><rect x="9.60" y="18.80" width="1.5" height="1.5" fill="#3a3a3a"/><rect x="18.80" y="19.00" width="1.5" height="1.5" fill="#3a3a3a"/><rect x="19.00" y="18.80" width="1.5" height="1.5" fill="#3a3a3a"/><rect x="19" y="0" width="2" height="21" fill="#333"/></svg>
<svg style="position:absolute;left:989.5px;top:156px;" width="21" height="21" viewBox="0 0 21 21"><rect x="0.00" y="0.20" width="1.5" height="1.5" fill="#3a3a3a"/><rect x="0.20" y="0.00" width="1.5" height="1.5" fill="#3a3a3a"/><rect x="0.00" y="9.60" width="1.5" height="1.5" fill="#3a3a3a"/><rect x="9.60" y="0.00" width="1.5" height="1.5" fill="#3a3a3a"/><rect x="0.00" y="19.00" width="1.5" height="1.5" fill="#3a3a3a"/><rect x="19.00" y="0.00" width="1.5" height="1.5" fill="#3a3a3a"/><rect x="2.35" y="0.20" width="1.5" height="1.5" fill="#3a3a3a"/><rect x="0.20" y="2.35" width="1.5" height="1.5" fill="#3a3a3a"/><rect x="2.35" y="9.60" width="1.5" height="1.5" fill="#3a3a3a"/><rect x="9.60" y="2.35" width="1.5" height="1.5" fill="#3a3a3a"/><rect x="2.35" y="19.00" width="1.5" height="1.5" fill="#3a3a3a"/><rect x="19.00" y="2.35" width="1.5" height="1.5" fill="#3a3a3a"/><rect x="4.70" y="0.20" width="1.5" height="1.5" fill="#3a3a3a"/><rect x="0.20" y="4.70" width="1.5" height="1.5" fill="#3a3a3a"/><rect x="4.70" y="9.60" width="1.5" height="1.5" fill="#3a3a3a"/><rect x="9.60" y="4.70" width="1.5" height="1.5" fill="#3a3a3a"/><rect x="4.70" y="19.00" width="1.5" height="1.5" fill="#3a3a3a"/><rect x="19.00" y="4.70" width="1.5" height="1.5" fill="#3a3a3a"/><rect x="7.05" y="0.20" width="1.5" height="1.5" fill="#3a3a3a"/><rect x="0.20" y="7.05" width="1.5" height="1.5" fill="#3a3a3a"/><rect x="7.05" y="9.60" width="1.5" height="1.5" fill="#3a3a3a"/><rect x="9.60" y="7.05" width="1.5" height="1.5" fill="#3a3a3a"/><rect x="7.05" y="19.00" width="1.5" height="1.5" fill="#3a3a3a"/><rect x="19.00" y="7.05" width="1.5" height="1.5" fill="#3a3a3a"/><rect x="9.40" y="0.20" width="1.5" height="1.5" fill="#3a3a3a"/><rect x="0.20" y="9.40" width="1.5" height="1.5" fill="#3a3a3a"/><rect x="9.40" y="9.60" width="1.5" height="1.5" fill="#3a3a3a"/><rect x="9.60" y="9.40" width="1.5" height="1.5" fill="#3a3a3a"/><rect x="9.40" y="19.00" width="1.5" height="1.5" fill="#3a3a3a"/><rect x="19.00" y="9.40" width="1.5" height="1.5" fill="#3a3a3a"/><rect x="11.75" y="0.20" width="1.5" height="1.5" fill="#3a3a3a"/><rect x="0.20" y="11.75" width="1.5" height="1.5" fill="#3a3a3a"/><rect x="11.75" y="9.60" width="1.5" height="1.5" fill="#3a3a3a"/><rect x="9.60" y="11.75" width="1.5" height="1.5" fill="#3a3a3a"/><rect x="11.75" y="19.00" width="1.5" height="1.5" fill="#3a3a3a"/><rect x="19.00" y="11.75" width="1.5" height="1.5" fill="#3a3a3a"/><rect x="14.10" y="0.20" width="1.5" height="1.5" fill="#3a3a3a"/><rect x="0.20" y="14.10" width="1.5" height="1.5" fill="#3a3a3a"/><rect x="14.10" y="9.60" width="1.5" height="1.5" fill="#3a3a3a"/><rect x="9.60" y="14.10" width="1.5" height="1.5" fill="#3a3a3a"/><rect x="14.10" y="19.00" width="1.5" height="1.5" fill="#3a3a3a"/><rect x="19.00" y="14.10" width="1.5" height="1.5" fill="#3a3a3a"/><rect x="16.45" y="0.20" width="1.5" height="1.5" fill="#3a3a3a"/><rect x="0.20" y="16.45" width="1.5" height="1.5" fill="#3a3a3a"/><rect x="16.45" y="9.60" width="1.5" height="1.5" fill="#3a3a3a"/><rect x="9.60" y="16.45" width="1.5" height="1.5" fill="#3a3a3a"/><rect x="16.45" y="19.00" width="1.5" height="1.5" fill="#3a3a3a"/><rect x="19.00" y="16.45" width="1.5" height="1.5" fill="#3a3a3a"/><rect x="18.80" y="0.20" width="1.5" height="1.5" fill="#3a3a3a"/><rect x="0.20" y="18.80" width="1.5" height="1.5" fill="#3a3a3a"/><rect x="18.80" y="9.60" width="1.5" height="1.5" fill="#3a3a3a"/><rect x="9.60" y="18.80" width="1.5" height="1.5" fill="#3a3a3a"/><rect x="18.80" y="19.00" width="1.5" height="1.5" fill="#3a3a3a"/><rect x="19.00" y="18.80" width="1.5" height="1.5" fill="#3a3a3a"/><rect x="0" y="19" width="21" height="2" fill="#333"/></svg>
<svg style="position:absolute;left:1029px;top:155px;" width="22" height="22" viewBox="0 0 22 22"><rect x="1" y="1" width="20" height="20" fill="none" stroke="#b0b0b0" stroke-width="1.6"/><circle cx="11" cy="11" r="6" fill="none" stroke="#b8b8b8" stroke-width="3" stroke-dasharray="2.2 2.5"/><circle cx="11" cy="11" r="4.2" fill="none" stroke="#b0b0b0" stroke-width="2"/></svg>
<svg style="position:absolute;left:782px;top:205px;" width="24" height="22" viewBox="0 0 24 22"><path d="M2 10 L10 2 L18 10 L10 18Z" fill="#fff" stroke="#222" stroke-width="2.2"/><path d="M4 11 L16 11 L10 17Z" fill="#2a9fd8"/><path d="M20 14 C19 16 18.5 17 18.5 18.5 C18.5 20 21.5 20 21.5 18.5 C21.5 17 21 16 20 14Z" fill="#2a9fd8"/></svg>
<svg style="position:absolute;left:818px;top:206px;" width="24" height="20" viewBox="0 0 24 20"><path d="M2 17 L3 13 L17 2 L21 5 L7 16Z" fill="#a8a8a8"/></svg>
<div style="position:absolute;left:864px;top:202px;width:97px;height:33px;background:#fafafa;border:1px solid #e3e3e3;box-sizing:border-box"></div>
<span id="t31" class="t" style="left:875px;top:210.46px;font-size:18px;color:#a8a8a8;font-weight:400;font-family:'Liberation Sans', sans-serif;transform:scaleX(0.9527);">DashDc</span>
<svg style="position:absolute;left:938px;top:211px;" width="18" height="12" viewBox="0 0 18 12"><path d="M1 2 L9 9 L17 2" fill="none" stroke="#9a9a9a" stroke-width="1.8"/></svg>
<div style="position:absolute;left:974px;top:202px;width:67px;height:33px;background:#fafafa;border:1px solid #e3e3e3;box-sizing:border-box"></div>
<span id="t32" class="t" style="left:985px;top:210.46px;font-size:18px;color:#a8a8a8;font-weight:400;font-family:'Liberation Sans', sans-serif;">1</span>
<svg style="position:absolute;left:1018px;top:211px;" width="18" height="12" viewBox="0 0 18 12"><path d="M1 2 L9 9 L17 2" fill="none" stroke="#9a9a9a" stroke-width="1.8"/></svg>
<svg style="position:absolute;left:1112px;top:161px;" width="38" height="48" viewBox="0 0 38 48"><path d="M3 3 L24 3 L34 13 L34 44 L3 44Z" fill="#f3f3f3" stroke="#444" stroke-width="3.2"/><path d="M23 3 L23 14 L34 14" fill="none" stroke="#444" stroke-width="3"/><rect x="8" y="11" width="3" height="3" fill="#444"/><rect x="8" y="18" width="3" height="3" fill="#444"/><rect x="8" y="25" width="3" height="3" fill="#444"/><path d="M10 40 L22 22 L26 22 L29 40 L25 40 L24.5 35 L18 35 L15 40Z M20 31.5 L24 31.5 L23.5 26Z" fill="#d02030"/></svg>
<span id="t33" class="t" style="left:1100.5px;top:212.16px;font-size:16px;color:#111;font-weight:400;font-family:'Liberation Sans', sans-serif;transform:scaleX(0.9775);">Стили...</span>
<div style="position:absolute;left:0px;top:278px;width:54px;height:1001px;background:#2b5797"></div>
<div style="position:absolute;left:2497px;top:278px;width:62px;height:1001px;background:#2b5797"></div>
<div style="position:absolute;left:2497px;top:278px;width:10px;height:966px;background:#2a5290"></div>
<div style="position:absolute;left:2496px;top:278px;width:1px;height:966px;background:#c5cad3"></div>
<svg style="position:absolute;left:14px;top:291px;" width="28" height="28" viewBox="0 0 28 28"><text x="14" y="24" text-anchor="middle" font-family="Liberation Serif, serif" font-weight="700" font-size="29" fill="#505050" stroke="#d8d8d8" stroke-width="1">A</text></svg>
<svg style="position:absolute;left:15px;top:339px;" width="24" height="22" viewBox="0 0 24 22"><rect x="1" y="1" width="22" height="20" fill="#fff" stroke="#888" stroke-width="1.5"/><path d="M2.5 19.5 L2.5 13 L8 8 L13 13 L16 11 L21.5 15 L21.5 19.5Z" fill="#2a9fd8"/><circle cx="18" cy="6" r="2.3" fill="#e8952f"/></svg>
<svg style="position:absolute;left:15px;top:385px;" width="24" height="24" viewBox="0 0 24 24"><rect x="7" y="8" width="15" height="14" fill="#f0f0f0" stroke="#444" stroke-width="1.6"/><rect x="6" y="7" width="17" height="16" fill="none" stroke="#ddd" stroke-width="0.6"/><circle cx="9" cy="9" r="7" fill="#e4e4e4" stroke="#444" stroke-width="1.6"/></svg>
<svg style="position:absolute;left:19px;top:418px;" width="12" height="14" viewBox="0 0 12 14"><path d="M1 1 L11 7 L1 13Z" fill="#fff"/></svg>
<svg style="position:absolute;left:15px;top:454px;" width="24" height="26" viewBox="0 0 24 26"><rect x="10" y="1" width="3.5" height="23" fill="#f0f0f0" stroke="#777" stroke-width="1"/></svg>
<svg style="position:absolute;left:15px;top:500px;" width="24" height="24" viewBox="0 0 24 24"><rect x="1.5" y="1.5" width="16" height="17" fill="#fff" stroke="#555" stroke-width="1.5"/><rect x="7" y="7" width="15" height="15" fill="#d98a4e" stroke="#555" stroke-width="1.5"/><path d="M10 11 L19 11 M10 14.5 L19 14.5 M10 18 L19 18" stroke="#6a3a1a" stroke-width="1.2"/></svg>
<svg style="position:absolute;left:15px;top:548px;" width="24" height="22" viewBox="0 0 24 22"><rect x="1" y="1" width="22" height="20" fill="#fff" stroke="#999" stroke-width="1.2"/><rect x="1.5" y="1.5" width="21" height="5" fill="#2a9fd8"/><path d="M2 10 L22 10 M2 14 L22 14 M2 18 L22 18 M8 7 L8 21 M15 7 L15 21" stroke="#555" stroke-width="1.6"/></svg>
<svg style="position:absolute;left:15px;top:594px;" width="24" height="24" viewBox="0 0 24 24"><circle cx="12" cy="12" r="10.5" fill="#ddd" stroke="#777" stroke-width="1.5"/><path d="M12 1.5 L12 22.5 M1.5 12 L22.5 12 M3 7 L21 7 M3 17 L21 17" stroke="#555" stroke-width="1.3" fill="none"/><ellipse cx="12" cy="12" rx="5" ry="10.5" fill="none" stroke="#555" stroke-width="1.3"/></svg>
<svg style="position:absolute;left:15px;top:641px;" width="24" height="24" viewBox="0 0 24 24"><rect x="1" y="1" width="22" height="22" fill="#fff" stroke="#999" stroke-width="1.4"/><rect x="4" y="8" width="5" height="12" fill="#d98a4e"/><rect x="4" y="4" width="5" height="3" fill="#555"/><rect x="11" y="4" width="9" height="4" fill="#2a9fd8"/><path d="M18 11 L18 17 L13 17 M15 15 L13 17 L15 19" stroke="#444" stroke-width="1.4" fill="none"/></svg>
<svg style="position:absolute;left:15px;top:687px;" width="24" height="24" viewBox="0 0 24 24"><rect x="1" y="1" width="22" height="22" fill="#fff" stroke="#999" stroke-width="1.4"/><rect x="4" y="8" width="5" height="12" fill="#d98a4e"/><rect x="4" y="4" width="5" height="3" fill="#555"/><rect x="11" y="4" width="9" height="4" fill="#2a9fd8"/><path d="M18 11 L18 17 L13 17 M15 15 L13 17 L15 19" stroke="#444" stroke-width="1.4" fill="none"/></svg>
<svg style="position:absolute;left:15px;top:734px;" width="24" height="22" viewBox="0 0 24 22"><rect x="1" y="1" width="22" height="20" fill="#fff" stroke="#999" stroke-width="1"/><rect x="3" y="3" width="1.5" height="13" fill="#444"/><rect x="5.5" y="3" width="1" height="13" fill="#444"/><rect x="7.5" y="3" width="2" height="13" fill="#444"/><rect x="10.5" y="3" width="1" height="13" fill="#444"/><rect x="12.5" y="3" width="1.5" height="13" fill="#444"/><rect x="15" y="3" width="1" height="13" fill="#444"/><rect x="17" y="3" width="2" height="13" fill="#444"/><rect x="20" y="3" width="1" height="13" fill="#444"/><path d="M3 18.5 L21 18.5" stroke="#444" stroke-width="1" stroke-dasharray="1.5 1"/></svg>
<svg style="position:absolute;left:15px;top:780px;" width="24" height="24" viewBox="0 0 24 24"><rect x="1" y="1" width="22" height="22" fill="#fff" stroke="#999" stroke-width="1.4"/><path d="M6 15 L11 3 L13 3 L18 15 L15.5 15 L14.5 12 L9.5 12 L8.5 15Z M10.3 10 L13.7 10 L12 5.5Z" fill="#3a7fc8"/><path d="M5 18 L19 18 M5 20.5 L19 20.5" stroke="#888" stroke-width="1.2"/></svg>
<svg style="position:absolute;left:15px;top:826px;" width="24" height="24" viewBox="0 0 24 24"><rect x="2" y="2" width="20" height="20" fill="#fff" stroke="#999" stroke-width="1.4"/><rect x="4" y="4" width="16" height="16" fill="#f4f4f4" stroke="#777" stroke-width="1.2"/><path d="M6.5 12 L10 15.5 L17 8" fill="none" stroke="#3aa04a" stroke-width="2"/></svg>
<svg style="position:absolute;left:15px;top:872px;" width="24" height="24" viewBox="0 0 24 24"><rect x="1" y="1" width="22" height="22" fill="#fff" stroke="#999" stroke-width="1.4"/><path d="M6 13 L11 2.5 L13 2.5 L18 13 L15.5 13 L14.5 10.5 L9.5 10.5 L8.5 13Z M10.3 8.5 L13.7 8.5 L12 4.5Z" fill="#3a7fc8"/><rect x="4" y="16" width="16" height="5" fill="#fff" stroke="#666" stroke-width="1"/><path d="M7 18.5 L8 18.5 M11.5 18.5 L12.5 18.5 M16 18.5 L17 18.5" stroke="#444" stroke-width="1.5"/></svg>
<svg style="position:absolute;left:15px;top:918px;" width="24" height="18" viewBox="0 0 24 18"><path d="M1.5 15 A10.5 10.5 0 0 1 22.5 15" fill="none" stroke="#2a9fd8" stroke-width="3.5"/><path d="M12 15 L17 8" stroke="#555" stroke-width="2.2"/><circle cx="12" cy="15" r="2" fill="#555"/></svg>
<svg style="position:absolute;left:19px;top:951px;" width="12" height="14" viewBox="0 0 12 14"><path d="M1 1 L11 7 L1 13Z" fill="#fff"/></svg>
<svg style="position:absolute;left:15px;top:988px;" width="24" height="24" viewBox="0 0 24 24"><rect x="1" y="1" width="22" height="22" fill="#fff" stroke="#999" stroke-width="1.4"/><rect x="3.5" y="3.5" width="17" height="17" fill="#999"/><rect x="7.0" y="3.5" width="1" height="17" fill="#fff"/><rect x="3.5" y="7.0" width="17" height="1" fill="#fff"/><rect x="10.5" y="3.5" width="1" height="17" fill="#fff"/><rect x="3.5" y="10.5" width="17" height="1" fill="#fff"/><rect x="14.0" y="3.5" width="1" height="17" fill="#fff"/><rect x="3.5" y="14.0" width="17" height="1" fill="#fff"/><rect x="17.5" y="3.5" width="1" height="17" fill="#fff"/><rect x="3.5" y="17.5" width="17" height="1" fill="#fff"/></svg>
<svg style="position:absolute;left:15px;top:1034px;" width="24" height="26" viewBox="0 0 24 26"><path d="M1.5 24.5 L1.5 14 L8 14 L8 24.5Z" fill="#ddd" stroke="#999" stroke-width="1.2"/><path d="M8 24.5 L8 8 L14.5 8 L14.5 24.5Z" fill="#2a9fd8" stroke="#999" stroke-width="1.2"/><path d="M14.5 24.5 L14.5 1.5 L21.5 1.5 L21.5 24.5Z" fill="#fff" stroke="#999" stroke-width="1.2"/></svg>
<svg style="position:absolute;left:15px;top:1081px;" width="24" height="24" viewBox="0 0 24 24"><rect x="1.5" y="1.5" width="21" height="18" fill="#fff" stroke="#999" stroke-width="1.4"/><rect x="3.5" y="3.5" width="17" height="14" fill="none" stroke="#666" stroke-width="1" stroke-dasharray="1 1"/><path d="M7 8 L17 8 M8 11 L16 11" stroke="#555" stroke-width="1.4"/><circle cx="6" cy="16" r="2.5" fill="#fff" stroke="#777" stroke-width="1.2"/><path d="M5 18 L5 22 L7 22 L7 18" stroke="#777" stroke-width="1" fill="none"/></svg>
<svg style="position:absolute;left:15px;top:1129px;" width="24" height="18" viewBox="0 0 24 18"><path d="M7 3 L1.5 9 L7 15 M17 3 L22.5 9 L17 15 M14 2 L10 16" fill="none" stroke="#888" stroke-width="2.6"/></svg>
<div style="position:absolute;left:15px;top:1178px;width:24px;height:3px;background:#d9935a"></div>
<svg style="position:absolute;left:19px;top:1191px;" width="16" height="10" viewBox="0 0 16 10"><path d="M0 9 L8 1 L16 9Z" fill="#fff"/></svg>
<svg style="position:absolute;left:19px;top:1224px;" width="16" height="10" viewBox="0 0 16 10"><path d="M0 1 L8 9 L16 1Z" fill="#fff"/></svg>
<svg style="position:absolute;left:2520px;top:305px;" width="28" height="30" viewBox="0 0 28 30"><path d="M4 26 L14 16" stroke="#e8e8e8" stroke-width="6.5" stroke-linecap="round"/><path d="M4 26 L14 16" stroke="#3c3c3c" stroke-width="4.5" stroke-linecap="round"/><circle cx="19.5" cy="10.5" r="7.3" fill="#3c3c3c" stroke="#e8e8e8" stroke-width="1"/><circle cx="21" cy="8.5" r="2.8" fill="#e8e8e8"/></svg>
<svg style="position:absolute;left:2524px;top:375px;" width="22" height="28" viewBox="0 0 22 28"><path d="M9 2 L20 2 L14 12 L20 12 L3 26 L9 16 L3 16Z" fill="#d9901f" stroke="#f2e6d0" stroke-width="1"/></svg>
<svg style="position:absolute;left:2525px;top:444px;" width="22" height="28" viewBox="0 0 22 28"><rect x="1.5" y="1.5" width="9" height="9" fill="#2a2a2a" stroke="#e6e6e6" stroke-width="1.2"/><rect x="4" y="4" width="4" height="4" fill="#2a9fd8"/><path d="M6 10.5 L6 22 L10 22 M6 15 L10 15" stroke="#222" stroke-width="1.5" fill="none"/><rect x="10.5" y="9.5" width="9" height="9" fill="#2a2a2a" stroke="#e6e6e6" stroke-width="1.2"/><rect x="13" y="12" width="4" height="4" fill="#d98a4e"/><rect x="10.5" y="18.5" width="9" height="9" fill="#2a2a2a" stroke="#e6e6e6" stroke-width="1.2"/><rect x="13" y="21" width="4" height="4" fill="#d98a4e"/></svg>
<svg style="position:absolute;left:2524px;top:513px;" width="22" height="26" viewBox="0 0 22 26"><path d="M2 5 C2 0 20 0 20 5 L20 21 C20 26 2 26 2 21Z" fill="#d98a4e" stroke="#fff" stroke-width="1.2"/><ellipse cx="11" cy="5" rx="8" ry="3" fill="#e8a775"/></svg>
<svg style="position:absolute;left:2521px;top:842px;" width="28" height="32" viewBox="0 0 28 32"><path d="M26 1 L26 31 L1 16Z" fill="#5076b4"/></svg>
<div style="position:absolute;left:54px;top:278px;width:2442px;height:921px;background:#efefef"></div>
<div style="position:absolute;left:54px;top:1199px;width:2442px;height:3px;background:#2b5797"></div>
<div style="position:absolute;left:54px;top:1202px;width:2442px;height:42px;background:#efefef"></div>
<div style="position:absolute;left:0px;top:1244px;width:2559px;height:35px;background:#2b5797"></div>
<svg style="position:absolute;left:69px;top:1209px;" width="23" height="20" viewBox="0 0 23 20"><rect x="1" y="1" width="20" height="17" fill="#f3f3f3" stroke="#555" stroke-width="2"/><rect x="1" y="1" width="20" height="3.5" fill="#444"/><path d="M7 8.5 L5 11 L7 13.5 M15 8.5 L17 11 L15 13.5" stroke="#4fb3e8" stroke-width="1.6" fill="none"/></svg>
<span id="t34" class="t" style="left:99.3px;top:1211.46px;font-size:16px;color:#111;font-weight:400;font-family:'Liberation Sans', sans-serif;transform:scaleX(0.9815);">Код</span>
<div style="position:absolute;left:143px;top:1202px;width:88px;height:35px;background:#2b5797"></div>
<svg style="position:absolute;left:153px;top:1206px;" width="21" height="26" viewBox="0 0 21 26"><path d="M2 2 L12 2 L19 9 L19 23.5 L2 23.5Z" fill="#f3f3f3" stroke="#555" stroke-width="2"/><path d="M12 2 L12 9 L19 9" fill="none" stroke="#555" stroke-width="1.6"/></svg>
<span id="t35" class="t" style="left:181px;top:1211.46px;font-size:16px;color:#fff;font-weight:400;font-family:'Liberation Sans', sans-serif;transform:scaleX(0.8970);">Page1</span>
<span id="t36" class="t" style="left:7.6px;top:1254.10px;font-size:18px;color:#fff;font-weight:400;font-family:'Liberation Serif', serif;transform:scaleX(0.9409);">Page1</span>
<div style="position:absolute;left:2130px;top:1244px;width:1px;height:35px;background:#5a7bb0"></div>
<svg style="position:absolute;left:2139px;top:1253px;" width="23" height="22" viewBox="0 0 23 22"><rect x="1" y="1" width="21" height="20" fill="#fff" stroke="#888" stroke-width="1"/><rect x="3" y="3" width="17" height="16" fill="#fff" stroke="#333" stroke-width="1.5"/><path d="M8 8 L6 11 L8 14 M15 8 L17 11 L15 14" stroke="#333" stroke-width="1.5" fill="none"/></svg>
<svg style="position:absolute;left:2172px;top:1253px;" width="23" height="22" viewBox="0 0 23 22"><rect x="1" y="1" width="21" height="20" fill="#fff" stroke="#888" stroke-width="1"/><rect x="3" y="3" width="17" height="16" fill="#fff" stroke="#333" stroke-width="1.5"/><path d="M8.5 7.5 L11.5 5.5 L14.5 7.5 M8.5 14.5 L11.5 16.5 L14.5 14.5" stroke="#333" stroke-width="1.5" fill="none"/></svg>
<svg style="position:absolute;left:2205px;top:1253px;" width="23" height="22" viewBox="0 0 23 22"><rect x="1" y="1" width="21" height="20" fill="#fff" stroke="#888" stroke-width="1"/><rect x="3" y="3" width="17" height="16" fill="#fff" stroke="#333" stroke-width="1.5"/><path d="M7 6 L7 16 M16 6 L16 16" stroke="#333" stroke-width="1.8"/><rect x="10.7" y="8" width="1.6" height="1.6" fill="#333"/><rect x="10.7" y="12.5" width="1.6" height="1.6" fill="#333"/></svg>
<span id="t37" class="t" style="left:2239.6px;top:1254.00px;font-size:18px;color:#fff;font-weight:400;font-family:'Liberation Serif', serif;transform:scaleX(0.9619);">100%</span>
<div style="position:absolute;left:2295px;top:1262px;width:18px;height:2.5px;background:#fff"></div>
<div style="position:absolute;left:2329px;top:1263px;width:180px;height:1px;background:#7f9cc8"></div>
<div style="position:absolute;left:2416px;top:1255px;width:6px;height:15px;background:#fff"></div>
<div style="position:absolute;left:2524px;top:1262.5px;width:18px;height:2.5px;background:#fff"></div>
<div style="position:absolute;left:2531.75px;top:1254.5px;width:2.5px;height:18px;background:#fff"></div>
<svg width="0" height="0" style="position:absolute"><defs><path id="dotrow" d="M255 0h1v1h-1zM269 0h1v1h-1zM283 0h1v1h-1zM297 0h1v1h-1zM311 0h1v1h-1zM326 0h1v1h-1zM340 0h1v1h-1zM354 0h1v1h-1zM368 0h1v1h-1zM382 0h1v1h-1zM396 0h1v1h-1zM411 0h1v1h-1zM425 0h1v1h-1zM439 0h1v1h-1zM453 0h1v1h-1zM467 0h1v1h-1zM481 0h1v1h-1zM496 0h1v1h-1zM510 0h1v1h-1zM524 0h1v1h-1zM538 0h1v1h-1zM552 0h1v1h-1zM566 0h1v1h-1zM581 0h1v1h-1zM595 0h1v1h-1zM609 0h1v1h-1zM623 0h1v1h-1zM637 0h1v1h-1zM652 0h1v1h-1zM666 0h1v1h-1zM680 0h1v1h-1zM694 0h1v1h-1zM708 0h1v1h-1zM722 0h1v1h-1zM737 0h1v1h-1zM751 0h1v1h-1zM765 0h1v1h-1zM779 0h1v1h-1zM793 0h1v1h-1zM807 0h1v1h-1zM822 0h1v1h-1zM836 0h1v1h-1zM850 0h1v1h-1zM864 0h1v1h-1zM878 0h1v1h-1zM892 0h1v1h-1zM907 0h1v1h-1zM921 0h1v1h-1zM935 0h1v1h-1zM949 0h1v1h-1zM963 0h1v1h-1zM978 0h1v1h-1zM992 0h1v1h-1zM1006 0h1v1h-1zM1020 0h1v1h-1zM1034 0h1v1h-1zM1048 0h1v1h-1zM1063 0h1v1h-1zM1077 0h1v1h-1zM1091 0h1v1h-1zM1105 0h1v1h-1zM1119 0h1v1h-1zM1133 0h1v1h-1zM1148 0h1v1h-1zM1162 0h1v1h-1zM1176 0h1v1h-1zM1190 0h1v1h-1zM1204 0h1v1h-1zM1218 0h1v1h-1zM1233 0h1v1h-1zM1247 0h1v1h-1zM1261 0h1v1h-1zM1275 0h1v1h-1zM1289 0h1v1h-1zM1303 0h1v1h-1zM1318 0h1v1h-1zM1332 0h1v1h-1zM1346 0h1v1h-1zM1360 0h1v1h-1zM1374 0h1v1h-1zM1389 0h1v1h-1zM1403 0h1v1h-1zM1417 0h1v1h-1zM1431 0h1v1h-1zM1445 0h1v1h-1zM1459 0h1v1h-1zM1474 0h1v1h-1zM1488 0h1v1h-1zM1502 0h1v1h-1zM1516 0h1v1h-1zM1530 0h1v1h-1zM1544 0h1v1h-1zM1559 0h1v1h-1zM1573 0h1v1h-1zM1587 0h1v1h-1zM1601 0h1v1h-1zM1615 0h1v1h-1zM1629 0h1v1h-1zM1644 0h1v1h-1zM1658 0h1v1h-1zM1672 0h1v1h-1zM1686 0h1v1h-1zM1700 0h1v1h-1zM1715 0h1v1h-1zM1729 0h1v1h-1zM1743 0h1v1h-1zM1757 0h1v1h-1zM1771 0h1v1h-1zM1785 0h1v1h-1zM1800 0h1v1h-1z" fill="#bdbdbd"/></defs></svg>
<div style="position:absolute;left:61px;top:284px;width:1779px;height:724px;background:#fff;border:1px solid #c6c6c6;box-sizing:border-box"></div>
<div style="position:absolute;left:62px;top:285px;width:178px;height:28px;background:#efefef"></div>
<div style="position:absolute;left:240px;top:285px;width:1571px;height:8px;background:#ececec"></div>
<div style="position:absolute;left:240px;top:306px;width:1571px;height:7px;background:#ececec"></div>
<span id="t38" class="t" style="left:74.6px;top:295.65px;font-size:14px;color:#111;font-weight:400;font-family:'Liberation Sans', sans-serif;transform:scaleX(1.0469);">Настроить бэнды...</span>
<svg style="position:absolute;left:215px;top:292px;" width="23" height="14" viewBox="0 0 23 14"><path d="M9 1 L1 7 L9 13Z" fill="#2a9fd8"/><path d="M13 1 L21 7 L13 13Z" fill="#2a9fd8"/></svg>
<span class="t rn" style="left:285.69px;top:293px;width:24px;text-align:center;font-size:13px">1</span>
<div style="position:absolute;left:269px;top:299px;width:2px;height:2px;background:#222"></div>
<span class="t rn" style="left:342.39px;top:293px;width:24px;text-align:center;font-size:13px">2</span>
<div style="position:absolute;left:326px;top:299px;width:2px;height:2px;background:#222"></div>
<span class="t rn" style="left:399.08px;top:293px;width:24px;text-align:center;font-size:13px">3</span>
<div style="position:absolute;left:383px;top:299px;width:2px;height:2px;background:#222"></div>
<span class="t rn" style="left:455.77px;top:293px;width:24px;text-align:center;font-size:13px">4</span>
<div style="position:absolute;left:439px;top:299px;width:2px;height:2px;background:#222"></div>
<span class="t rn" style="left:512.46px;top:293px;width:24px;text-align:center;font-size:13px">5</span>
<div style="position:absolute;left:496px;top:299px;width:2px;height:2px;background:#222"></div>
<span class="t rn" style="left:569.16px;top:293px;width:24px;text-align:center;font-size:13px">6</span>
<div style="position:absolute;left:553px;top:299px;width:2px;height:2px;background:#222"></div>
<span class="t rn" style="left:625.85px;top:293px;width:24px;text-align:center;font-size:13px">7</span>
<div style="position:absolute;left:610px;top:299px;width:2px;height:2px;background:#222"></div>
<span class="t rn" style="left:682.54px;top:293px;width:24px;text-align:center;font-size:13px">8</span>
<div style="position:absolute;left:666px;top:299px;width:2px;height:2px;background:#222"></div>
<span class="t rn" style="left:739.24px;top:293px;width:24px;text-align:center;font-size:13px">9</span>
<div style="position:absolute;left:723px;top:299px;width:2px;height:2px;background:#222"></div>
<span class="t rn" style="left:795.93px;top:293px;width:24px;text-align:center;font-size:13px">10</span>
<div style="position:absolute;left:780px;top:299px;width:2px;height:2px;background:#222"></div>
<span class="t rn" style="left:852.62px;top:293px;width:24px;text-align:center;font-size:13px">11</span>
<div style="position:absolute;left:836px;top:299px;width:2px;height:2px;background:#222"></div>
<span class="t rn" style="left:909.32px;top:293px;width:24px;text-align:center;font-size:13px">12</span>
<div style="position:absolute;left:893px;top:299px;width:2px;height:2px;background:#222"></div>
<span class="t rn" style="left:966.01px;top:293px;width:24px;text-align:center;font-size:13px">13</span>
<div style="position:absolute;left:950px;top:299px;width:2px;height:2px;background:#222"></div>
<span class="t rn" style="left:1022.70px;top:293px;width:24px;text-align:center;font-size:13px">14</span>
<div style="position:absolute;left:1006px;top:299px;width:2px;height:2px;background:#222"></div>
<span class="t rn" style="left:1079.39px;top:293px;width:24px;text-align:center;font-size:13px">15</span>
<div style="position:absolute;left:1063px;top:299px;width:2px;height:2px;background:#222"></div>
<span class="t rn" style="left:1136.09px;top:293px;width:24px;text-align:center;font-size:13px">16</span>
<div style="position:absolute;left:1120px;top:299px;width:2px;height:2px;background:#222"></div>
<span class="t rn" style="left:1192.78px;top:293px;width:24px;text-align:center;font-size:13px">17</span>
<div style="position:absolute;left:1176px;top:299px;width:2px;height:2px;background:#222"></div>
<span class="t rn" style="left:1249.47px;top:293px;width:24px;text-align:center;font-size:13px">18</span>
<div style="position:absolute;left:1233px;top:299px;width:2px;height:2px;background:#222"></div>
<span class="t rn" style="left:1306.17px;top:293px;width:24px;text-align:center;font-size:13px">19</span>
<div style="position:absolute;left:1290px;top:299px;width:2px;height:2px;background:#222"></div>
<span class="t rn" style="left:1362.86px;top:293px;width:24px;text-align:center;font-size:13px">20</span>
<div style="position:absolute;left:1347px;top:299px;width:2px;height:2px;background:#222"></div>
<span class="t rn" style="left:1419.55px;top:293px;width:24px;text-align:center;font-size:13px">21</span>
<div style="position:absolute;left:1403px;top:299px;width:2px;height:2px;background:#222"></div>
<span class="t rn" style="left:1476.25px;top:293px;width:24px;text-align:center;font-size:13px">22</span>
<div style="position:absolute;left:1460px;top:299px;width:2px;height:2px;background:#222"></div>
<span class="t rn" style="left:1532.94px;top:293px;width:24px;text-align:center;font-size:13px">23</span>
<div style="position:absolute;left:1517px;top:299px;width:2px;height:2px;background:#222"></div>
<span class="t rn" style="left:1589.63px;top:293px;width:24px;text-align:center;font-size:13px">24</span>
<div style="position:absolute;left:1573px;top:299px;width:2px;height:2px;background:#222"></div>
<span class="t rn" style="left:1646.33px;top:293px;width:24px;text-align:center;font-size:13px">25</span>
<div style="position:absolute;left:1630px;top:299px;width:2px;height:2px;background:#222"></div>
<span class="t rn" style="left:1703.02px;top:293px;width:24px;text-align:center;font-size:13px">26</span>
<div style="position:absolute;left:1687px;top:299px;width:2px;height:2px;background:#222"></div>
<span class="t rn" style="left:1759.71px;top:293px;width:24px;text-align:center;font-size:13px">27</span>
<div style="position:absolute;left:1743px;top:299px;width:2px;height:2px;background:#222"></div>
<div style="position:absolute;left:62px;top:313px;width:142px;height:43px;background:#e4eefa"></div>
<div style="position:absolute;left:204px;top:313px;width:5px;height:43px;background:#d7e1ed"></div>
<div style="position:absolute;left:209px;top:313px;width:3px;height:43px;background:#e4eefa"></div>
<div style="position:absolute;left:212px;top:313px;width:7px;height:43px;background:#ececec"></div>
<div style="position:absolute;left:233px;top:313px;width:7px;height:43px;background:#ececec"></div>
<svg style="position:absolute;left:0px;top:313px" width="1811" height="43"><use href="#dotrow" y="0"/><use href="#dotrow" y="14"/><use href="#dotrow" y="28"/><use href="#dotrow" y="42"/></svg>
<div style="position:absolute;left:62px;top:361px;width:142px;height:43px;background:#e4eefa"></div>
<div style="position:absolute;left:204px;top:361px;width:5px;height:43px;background:#d7e1ed"></div>
<div style="position:absolute;left:209px;top:361px;width:3px;height:43px;background:#e4eefa"></div>
<div style="position:absolute;left:212px;top:361px;width:7px;height:43px;background:#ececec"></div>
<div style="position:absolute;left:233px;top:361px;width:7px;height:43px;background:#ececec"></div>
<svg style="position:absolute;left:0px;top:361px" width="1811" height="43"><use href="#dotrow" y="0"/><use href="#dotrow" y="14"/><use href="#dotrow" y="28"/><use href="#dotrow" y="42"/></svg>
<div style="position:absolute;left:62px;top:409px;width:142px;height:227px;background:#e4eefa"></div>
<div style="position:absolute;left:204px;top:409px;width:5px;height:227px;background:#d7e1ed"></div>
<div style="position:absolute;left:209px;top:409px;width:3px;height:227px;background:#e4eefa"></div>
<div style="position:absolute;left:212px;top:409px;width:7px;height:227px;background:#ececec"></div>
<div style="position:absolute;left:233px;top:409px;width:7px;height:227px;background:#ececec"></div>
<svg style="position:absolute;left:0px;top:409px" width="1811" height="227"><use href="#dotrow" y="0"/><use href="#dotrow" y="14"/><use href="#dotrow" y="28"/><use href="#dotrow" y="42"/><use href="#dotrow" y="56"/><use href="#dotrow" y="70"/><use href="#dotrow" y="85"/><use href="#dotrow" y="99"/><use href="#dotrow" y="113"/><use href="#dotrow" y="127"/><use href="#dotrow" y="141"/><use href="#dotrow" y="155"/><use href="#dotrow" y="170"/><use href="#dotrow" y="184"/><use href="#dotrow" y="198"/><use href="#dotrow" y="212"/><use href="#dotrow" y="226"/></svg>
<div style="position:absolute;left:62px;top:641px;width:142px;height:72px;background:#e3fbe3"></div>
<div style="position:absolute;left:204px;top:641px;width:5px;height:72px;background:#d6ead6"></div>
<div style="position:absolute;left:209px;top:641px;width:3px;height:72px;background:#e3fbe3"></div>
<div style="position:absolute;left:212px;top:641px;width:7px;height:72px;background:#ececec"></div>
<div style="position:absolute;left:233px;top:641px;width:7px;height:72px;background:#ececec"></div>
<svg style="position:absolute;left:0px;top:641px" width="1811" height="72"><use href="#dotrow" y="0"/><use href="#dotrow" y="14"/><use href="#dotrow" y="28"/><use href="#dotrow" y="42"/><use href="#dotrow" y="56"/><use href="#dotrow" y="70"/></svg>
<div style="position:absolute;left:62px;top:718px;width:142px;height:43px;background:#e3fbe3"></div>
<div style="position:absolute;left:204px;top:718px;width:5px;height:43px;background:#d6ead6"></div>
<div style="position:absolute;left:209px;top:718px;width:3px;height:43px;background:#e3fbe3"></div>
<div style="position:absolute;left:212px;top:718px;width:7px;height:43px;background:#ececec"></div>
<div style="position:absolute;left:233px;top:718px;width:7px;height:43px;background:#ececec"></div>
<svg style="position:absolute;left:0px;top:718px" width="1811" height="43"><use href="#dotrow" y="0"/><use href="#dotrow" y="14"/><use href="#dotrow" y="28"/><use href="#dotrow" y="42"/></svg>
<div style="position:absolute;left:62px;top:766px;width:142px;height:57px;background:#fdfbe6"></div>
<div style="position:absolute;left:204px;top:766px;width:5px;height:57px;background:#e9e6d4"></div>
<div style="position:absolute;left:209px;top:766px;width:3px;height:57px;background:#fdfbe6"></div>
<div style="position:absolute;left:212px;top:766px;width:7px;height:57px;background:#ececec"></div>
<div style="position:absolute;left:233px;top:766px;width:7px;height:57px;background:#ececec"></div>
<svg style="position:absolute;left:0px;top:766px" width="1811" height="57"><use href="#dotrow" y="0"/><use href="#dotrow" y="14"/><use href="#dotrow" y="28"/><use href="#dotrow" y="42"/><use href="#dotrow" y="56"/></svg>
<div style="position:absolute;left:62px;top:828px;width:142px;height:43px;background:#fdfbe6"></div>
<div style="position:absolute;left:204px;top:828px;width:5px;height:43px;background:#e9e6d4"></div>
<div style="position:absolute;left:209px;top:828px;width:3px;height:43px;background:#fdfbe6"></div>
<div style="position:absolute;left:212px;top:828px;width:7px;height:43px;background:#ececec"></div>
<div style="position:absolute;left:233px;top:828px;width:7px;height:43px;background:#ececec"></div>
<svg style="position:absolute;left:0px;top:828px" width="1811" height="43"><use href="#dotrow" y="0"/><use href="#dotrow" y="14"/><use href="#dotrow" y="28"/><use href="#dotrow" y="42"/></svg>
<div style="position:absolute;left:62px;top:876px;width:142px;height:15px;background:#fdfbe6"></div>
<div style="position:absolute;left:204px;top:876px;width:5px;height:15px;background:#e9e6d4"></div>
<div style="position:absolute;left:209px;top:876px;width:3px;height:15px;background:#fdfbe6"></div>
<div style="position:absolute;left:212px;top:876px;width:7px;height:15px;background:#ececec"></div>
<div style="position:absolute;left:233px;top:876px;width:7px;height:15px;background:#ececec"></div>
<svg style="position:absolute;left:0px;top:876px" width="1811" height="15"><use href="#dotrow" y="0"/><use href="#dotrow" y="14"/></svg>
<div style="position:absolute;left:62px;top:896px;width:142px;height:29px;background:#e3fbe3"></div>
<div style="position:absolute;left:204px;top:896px;width:5px;height:29px;background:#d6ead6"></div>
<div style="position:absolute;left:209px;top:896px;width:3px;height:29px;background:#e3fbe3"></div>
<div style="position:absolute;left:212px;top:896px;width:7px;height:29px;background:#ececec"></div>
<div style="position:absolute;left:233px;top:896px;width:7px;height:29px;background:#ececec"></div>
<svg style="position:absolute;left:0px;top:896px" width="1811" height="29"><use href="#dotrow" y="0"/><use href="#dotrow" y="14"/><use href="#dotrow" y="28"/></svg>
<div style="position:absolute;left:62px;top:930px;width:142px;height:43px;background:#e4eefa"></div>
<div style="position:absolute;left:204px;top:930px;width:5px;height:43px;background:#d7e1ed"></div>
<div style="position:absolute;left:209px;top:930px;width:3px;height:43px;background:#e4eefa"></div>
<div style="position:absolute;left:212px;top:930px;width:7px;height:43px;background:#ececec"></div>
<div style="position:absolute;left:233px;top:930px;width:7px;height:43px;background:#ececec"></div>
<svg style="position:absolute;left:0px;top:930px" width="1811" height="43"><use href="#dotrow" y="0"/><use href="#dotrow" y="14"/><use href="#dotrow" y="28"/><use href="#dotrow" y="42"/></svg>
<div style="position:absolute;left:62px;top:766px;width:13px;height:130px;background:#e3fbe3"></div>
<div style="position:absolute;left:75px;top:766px;width:3px;height:125px;background:repeating-linear-gradient(to bottom,#c4c4c4 0 11px,transparent 11px 19px)"></div>
<div style="position:absolute;left:62px;top:978px;width:1777px;height:29px;background:#fff"></div>
<div style="position:absolute;left:62px;top:356px;width:178px;height:5px;background:#c0c0c0"></div>
<div style="position:absolute;left:240px;top:356px;width:1571px;height:5px;background:#e8e8e8"></div>
<div style="position:absolute;left:62px;top:404px;width:178px;height:5px;background:#c0c0c0"></div>
<div style="position:absolute;left:240px;top:404px;width:1571px;height:5px;background:#e8e8e8"></div>
<div style="position:absolute;left:62px;top:636px;width:178px;height:5px;background:#c0c0c0"></div>
<div style="position:absolute;left:240px;top:636px;width:1571px;height:5px;background:#e8e8e8"></div>
<div style="position:absolute;left:62px;top:713px;width:178px;height:5px;background:#c0c0c0"></div>
<div style="position:absolute;left:240px;top:713px;width:1571px;height:5px;background:#e8e8e8"></div>
<div style="position:absolute;left:62px;top:761px;width:178px;height:5px;background:#c0c0c0"></div>
<div style="position:absolute;left:240px;top:761px;width:1571px;height:5px;background:#e8e8e8"></div>
<div style="position:absolute;left:76px;top:823px;width:164px;height:5px;background:#c0c0c0"></div>
<div style="position:absolute;left:240px;top:823px;width:1571px;height:5px;background:#e8e8e8"></div>
<div style="position:absolute;left:76px;top:871px;width:164px;height:5px;background:#c0c0c0"></div>
<div style="position:absolute;left:240px;top:871px;width:1571px;height:5px;background:#e8e8e8"></div>
<div style="position:absolute;left:76px;top:891px;width:164px;height:5px;background:#c0c0c0"></div>
<div style="position:absolute;left:240px;top:891px;width:1571px;height:5px;background:#e8e8e8"></div>
<div style="position:absolute;left:62px;top:925px;width:178px;height:5px;background:#c0c0c0"></div>
<div style="position:absolute;left:240px;top:925px;width:1571px;height:5px;background:#e8e8e8"></div>
<div style="position:absolute;left:62px;top:973px;width:178px;height:5px;background:#c0c0c0"></div>
<div style="position:absolute;left:240px;top:973px;width:1571px;height:5px;background:#e8e8e8"></div>
<div style="position:absolute;left:239.5px;top:313px;width:1.6px;height:665px;background:repeating-linear-gradient(to bottom,#5a5a5a 0 6px,transparent 6px 9px)"></div>
<div style="position:absolute;left:1810.5px;top:313px;width:1.6px;height:665px;background:repeating-linear-gradient(to bottom,#5a5a5a 0 6px,transparent 6px 9px)"></div>
<div style="position:absolute;left:240px;top:312.5px;width:1572px;height:1.6px;background:repeating-linear-gradient(to right,#5a5a5a 0 6px,transparent 6px 9px)"></div>
<span class="t rn" style="left:219px;top:460.69px;width:18px;text-align:center;font-size:12px">1</span>
<span class="t rn" style="left:219px;top:517.39px;width:18px;text-align:center;font-size:12px">2</span>
<span class="t rn" style="left:219px;top:574.08px;width:18px;text-align:center;font-size:12px">3</span>
<span class="t rn" style="left:219px;top:630.77px;width:18px;text-align:center;font-size:12px">4</span>
<div style="position:absolute;left:226px;top:436px;width:2px;height:2px;background:#222"></div>
<div style="position:absolute;left:226px;top:493px;width:2px;height:2px;background:#222"></div>
<div style="position:absolute;left:226px;top:550px;width:2px;height:2px;background:#222"></div>
<div style="position:absolute;left:226px;top:606px;width:2px;height:2px;background:#222"></div>
<div style="position:absolute;left:226px;top:668px;width:2px;height:2px;background:#222"></div>
<span class="t rn" style="left:219px;top:693.19px;width:18px;text-align:center;font-size:12px">1</span>
<span id="t39" class="t" style="left:77.4px;top:323.56px;font-size:16px;color:#111;font-weight:400;font-family:'Liberation Sans', sans-serif;transform:scaleX(0.9727);">ReportTitle1</span>
<span id="t40" class="t" style="left:77.4px;top:370.56px;font-size:16px;color:#111;font-weight:400;font-family:'Liberation Sans', sans-serif;transform:scaleX(0.9306);">PageHeader1</span>
<span id="t41" class="t" style="left:77.2px;top:665.96px;font-size:16px;color:#111;font-weight:400;font-family:'Liberation Sans', sans-serif;transform:scaleX(0.9530);">DataHeader1</span>
<span id="t42" class="t" style="left:91.5px;top:783.06px;font-size:16px;color:#111;font-weight:400;font-family:'Liberation Sans', sans-serif;transform:scaleX(0.9583);">DataHeader2</span>
<span id="t43" class="t" style="left:91.5px;top:838.86px;font-size:16px;color:#111;font-weight:400;font-family:'Liberation Sans', sans-serif;transform:scaleX(0.9939);">Data1: gen</span>
<div style="position:absolute;left:62px;top:876px;width:142px;height:15px;overflow:hidden">
<span id="t44" class="t" style="left:29.5px;top:-2.94px;font-size:16px;color:#111;font-weight:400;font-family:'Liberation Sans', sans-serif;transform:scaleX(0.9591);">DataFooter2</span>
</div>
<span id="t45" class="t" style="left:77.2px;top:899.16px;font-size:16px;color:#111;font-weight:400;font-family:'Liberation Sans', sans-serif;transform:scaleX(0.9625);">DataFooter1</span>
<span id="t46" class="t" style="left:77.2px;top:940.46px;font-size:16px;color:#111;font-weight:400;font-family:'Liberation Sans', sans-serif;transform:scaleX(0.9317);">PageFooter1</span>
<div style="position:absolute;left:78px;top:454px;width:18px;height:115px;overflow:visible"><span class="t" style="left:0;top:0;font-size:16px;color:#111;transform-origin:0 0;transform:translate(0px,115px) rotate(-90deg);white-space:nowrap;width:115px;display:block">ColumnHeader1</span></div>
<div style="position:absolute;left:76px;top:718px;width:24px;height:48px;overflow:hidden"><span class="t" style="left:0;top:0;font-size:15px;color:#111;transform-origin:0 0;transform:translate(3.8px,48px) rotate(-90deg);white-space:nowrap">_spec_</span></div>
<div style="position:absolute;left:83px;top:718px;width:9px;height:1px;background:#777"></div>
<div style="position:absolute;left:76px;top:978px;width:24px;height:29px;overflow:hidden"><span class="t" style="left:0;top:0;font-size:16px;color:#111;transform-origin:0 0;transform:translate(3px,27px) rotate(-90deg);white-space:nowrap">r1:</span></div>
<div style="position:absolute;left:79px;top:978px;width:16px;height:1px;background:#777"></div>
<span id="t47" class="t" style="left:255.7px;top:319.68px;font-size:24px;color:#d3d3d3;font-weight:700;font-family:'Liberation Sans', sans-serif;transform:scaleX(0.9983);">EXEMES DEMO REPORT</span>
<span id="t48" class="t" style="left:944.5px;top:319.68px;font-size:22px;color:#000;font-weight:700;font-family:'Liberation Sans', sans-serif;transform:scaleX(0.9914);">Отчет по пробам</span>
<span id="t49" class="t" style="left:1574.8px;top:319.68px;font-size:24px;color:#d3d3d3;font-weight:700;font-family:'Liberation Sans', sans-serif;transform:scaleX(0.9989);">© EXEPLANT 2024</span>
<div style="position:absolute;left:546px;top:313px;width:6px;height:1.6px;background:#333"></div>
<div style="position:absolute;left:550.4px;top:313px;width:1.6px;height:6px;background:#333"></div>
<div style="position:absolute;left:546px;top:354.4px;width:6px;height:1.6px;background:#333"></div>
<div style="position:absolute;left:550.4px;top:350px;width:1.6px;height:6px;background:#333"></div>
<div style="position:absolute;left:241px;top:354.4px;width:6px;height:1.6px;background:#333"></div>
<div style="position:absolute;left:241px;top:350px;width:1.6px;height:6px;background:#333"></div>
<div style="position:absolute;left:1545px;top:313px;width:6px;height:1.6px;background:#333"></div>
<div style="position:absolute;left:1545px;top:313px;width:1.6px;height:6px;background:#333"></div>
<div style="position:absolute;left:1545px;top:354.4px;width:6px;height:1.6px;background:#333"></div>
<div style="position:absolute;left:1545px;top:350px;width:1.6px;height:6px;background:#333"></div>
<div style="position:absolute;left:1806px;top:313px;width:6px;height:1.6px;background:#333"></div>
<div style="position:absolute;left:1810.4px;top:313px;width:1.6px;height:6px;background:#333"></div>
<div style="position:absolute;left:1806px;top:354.4px;width:6px;height:1.6px;background:#333"></div>
<div style="position:absolute;left:1810.4px;top:350px;width:1.6px;height:6px;background:#333"></div>
<span id="t50" class="t" style="left:250px;top:370.31px;font-size:17px;color:#808080;font-weight:400;font-family:'Liberation Sans', sans-serif;transform:scaleX(1.0499);">Заголовок страницы</span>
<div style="position:absolute;left:241px;top:361px;width:6px;height:1.6px;background:#333"></div>
<div style="position:absolute;left:241px;top:361px;width:1.6px;height:6px;background:#333"></div>
<div style="position:absolute;left:241px;top:402.4px;width:6px;height:1.6px;background:#333"></div>
<div style="position:absolute;left:241px;top:398px;width:1.6px;height:6px;background:#333"></div>
<div style="position:absolute;left:1806px;top:361px;width:6px;height:1.6px;background:#333"></div>
<div style="position:absolute;left:1810.4px;top:361px;width:1.6px;height:6px;background:#333"></div>
<div style="position:absolute;left:1806px;top:402.4px;width:6px;height:1.6px;background:#333"></div>
<div style="position:absolute;left:1810.4px;top:398px;width:1.6px;height:6px;background:#333"></div>
<div style="position:absolute;left:283px;top:424px;width:1504.5px;height:137px;border:2px solid #111;box-sizing:border-box"></div>
<div style="position:absolute;left:283px;top:451px;width:1504px;height:2px;background:#111"></div>
<div style="position:absolute;left:283px;top:478px;width:1504px;height:2px;background:#111"></div>
<div style="position:absolute;left:283px;top:505px;width:1504px;height:2px;background:#111"></div>
<div style="position:absolute;left:283px;top:532px;width:1504px;height:2px;background:#111"></div>
<div style="position:absolute;left:496px;top:424px;width:2px;height:137px;background:#111"></div>
<span id="t51" class="t" style="left:293.8px;top:428.30px;font-size:15px;color:#000;font-weight:700;font-family:'Liberation Sans', sans-serif;transform:scaleX(1.063)">Период</span>
<span id="t52" class="t" style="left:505.9px;top:428.30px;font-size:15px;color:#000;font-weight:400;font-family:'Liberation Sans', sans-serif;transform:scaleX(1.0657);">с [FormatDateTime(ToDateTime([Start_date]),"dd.MM.yyyy")] по [FormatDateTime(ToDateTime([End_date]),"dd.MM.yyyy")]</span>
<span id="t53" class="t" style="left:293.8px;top:455.30px;font-size:15px;color:#000;font-weight:700;font-family:'Liberation Sans', sans-serif;transform:scaleX(1.063)">Рабочий центр</span>
<span id="t54" class="t" style="left:505.9px;top:455.30px;font-size:15px;color:#000;font-weight:400;font-family:'Liberation Sans', sans-serif;transform:scaleX(1.0665);">[IIf([ent_id]=="9999999","Все",[filter.ent_desc])]</span>
<span id="t55" class="t" style="left:293.8px;top:482.30px;font-size:15px;color:#000;font-weight:700;font-family:'Liberation Sans', sans-serif;transform:scaleX(1.0632);">Спецификация качества</span>
<span id="t56" class="t" style="left:505.9px;top:482.30px;font-size:15px;color:#000;font-weight:400;font-family:'Liberation Sans', sans-serif;transform:scaleX(1.0659);">[IIf([qm_spec]=="9999999","Все",[filter.qm_spec_name])]</span>
<span id="t57" class="t" style="left:293.8px;top:509.30px;font-size:15px;color:#000;font-weight:700;font-family:'Liberation Sans', sans-serif;transform:scaleX(1.063)">Материал</span>
<span id="t58" class="t" style="left:505.9px;top:509.30px;font-size:15px;color:#000;font-weight:400;font-family:'Liberation Sans', sans-serif;transform:scaleX(1.0650);">[IIf([item_id]=="checkall","Все",[filter.item_desc])]</span>
<span id="t59" class="t" style="left:293.8px;top:536.30px;font-size:15px;color:#000;font-weight:700;font-family:'Liberation Sans', sans-serif;transform:scaleX(1.063)">Статус</span>
<span id="t60" class="t" style="left:505.9px;top:536.30px;font-size:15px;color:#000;font-weight:400;font-family:'Liberation Sans', sans-serif;transform:scaleX(1.0665);">[IIf([sample_status]=="9999999","Все",[filter.description])]</span>
<span id="t61" class="t" style="left:858px;top:610.96px;font-size:16px;color:#a52a2a;font-weight:700;font-family:'Liberation Sans', sans-serif;transform:scaleX(0.9990);">Записи по выбранным критериям не найдены</span>
<div style="position:absolute;left:241px;top:608px;width:6px;height:1.6px;background:#333"></div>
<div style="position:absolute;left:241px;top:608px;width:1.6px;height:6px;background:#333"></div>
<div style="position:absolute;left:241px;top:634.4px;width:6px;height:1.6px;background:#333"></div>
<div style="position:absolute;left:241px;top:630px;width:1.6px;height:6px;background:#333"></div>
<div style="position:absolute;left:1806px;top:608px;width:6px;height:1.6px;background:#333"></div>
<div style="position:absolute;left:1810.4px;top:608px;width:1.6px;height:6px;background:#333"></div>
<div style="position:absolute;left:1806px;top:634.4px;width:6px;height:1.6px;background:#333"></div>
<div style="position:absolute;left:1810.4px;top:630px;width:1.6px;height:6px;background:#333"></div>
<div style="position:absolute;left:255px;top:656px;width:546px;height:56px;background:#b0dfe5"></div>
<div style="position:absolute;left:255px;top:656px;width:1546px;height:56px;background:#b0dfe5;border:2px solid #111;border-bottom-width:3px;box-sizing:border-box"></div>
<div style="position:absolute;left:538px;top:656px;width:2px;height:56px;background:#111"></div>
<div style="position:absolute;left:794px;top:656px;width:2px;height:56px;background:#111"></div>
<div style="position:absolute;left:1020px;top:656px;width:2px;height:56px;background:#111"></div>
<div style="position:absolute;left:1219px;top:656px;width:2px;height:56px;background:#111"></div>
<div style="position:absolute;left:1361px;top:656px;width:2px;height:56px;background:#111"></div>
<div style="position:absolute;left:1502px;top:656px;width:2px;height:56px;background:#111"></div>
<div style="position:absolute;left:1673px;top:656px;width:2px;height:56px;background:#111"></div>
<span id="t62" class="t" style="left:303.3px;top:672.61px;font-size:17px;color:#000;font-weight:700;font-family:'Liberation Sans', sans-serif;transform:scaleX(1.0512);">Наименование пробы</span>
<span id="t63" class="t" style="left:560.7px;top:672.61px;font-size:17px;color:#000;font-weight:700;font-family:'Liberation Sans', sans-serif;transform:scaleX(1.0542);">Спецификация качества</span>
<span id="t64" class="t" style="left:867px;top:672.61px;font-size:17px;color:#000;font-weight:700;font-family:'Liberation Sans', sans-serif;transform:scaleX(1.0483);">Материал</span>
<span id="t65" class="t" style="left:1110px;top:672.61px;font-size:17px;color:#000;font-weight:700;font-family:'Liberation Sans', sans-serif;transform:scaleX(1.0519);">РЦ</span>
<span id="t66" class="t" style="left:1268.3px;top:672.61px;font-size:17px;color:#000;font-weight:700;font-family:'Liberation Sans', sans-serif;transform:scaleX(1.0421);">Заказ</span>
<span id="t67" class="t" style="left:1390.7px;top:672.61px;font-size:17px;color:#000;font-weight:700;font-family:'Liberation Sans', sans-serif;transform:scaleX(1.0465);">Операция</span>
<span id="t68" class="t" style="left:1523px;top:662.31px;font-size:17px;color:#000;font-weight:700;font-family:'Liberation Sans', sans-serif;transform:scaleX(1.0553);">Дата и время</span>
<span id="t69" class="t" style="left:1523px;top:688.41px;font-size:17px;color:#000;font-weight:700;font-family:'Liberation Sans', sans-serif;transform:scaleX(1.0515);">запроса пробы</span>
<span id="t70" class="t" style="left:1678.6px;top:662.31px;font-size:17px;color:#000;font-weight:700;font-family:'Liberation Sans', sans-serif;transform:scaleX(1.0437);">Статус</span>
<span id="t71" class="t" style="left:1678.6px;top:688.41px;font-size:17px;color:#000;font-weight:700;font-family:'Liberation Sans', sans-serif;transform:scaleX(1.0363);">пробы</span>
<div style="position:absolute;left:255px;top:719px;width:1546px;height:44px;border:2px solid #111;border-bottom-width:3px;box-sizing:border-box"></div>
<div style="position:absolute;left:538px;top:719px;width:2px;height:44px;background:#111"></div>
<div style="position:absolute;left:794px;top:719px;width:2px;height:44px;background:#111"></div>
<div style="position:absolute;left:1020px;top:719px;width:2px;height:44px;background:#111"></div>
<div style="position:absolute;left:1219px;top:719px;width:2px;height:44px;background:#111"></div>
<div style="position:absolute;left:1361px;top:719px;width:2px;height:44px;background:#111"></div>
<div style="position:absolute;left:1502px;top:719px;width:2px;height:44px;background:#111"></div>
<div style="position:absolute;left:1673px;top:719px;width:2px;height:44px;background:#111"></div>
<span id="t72" class="t" style="left:380.2px;top:731.50px;font-size:15px;color:#000;font-weight:400;font-family:'Liberation Sans', sans-serif;transform:scaleX(1.0619);">[gen.sample_name]</span>
<span id="t73" class="t" style="left:592px;top:730.60px;font-size:15px;color:#000;font-weight:400;font-family:'Liberation Sans', sans-serif;transform:scaleX(1.0619);">[gen.qm_spec_name]</span>
<span id="t74" class="t" style="left:875.5px;top:730.60px;font-size:15px;color:#000;font-weight:400;font-family:'Liberation Sans', sans-serif;transform:scaleX(1.0672);">[gen.item]</span>
<span id="t75" class="t" style="left:1071px;top:730.60px;font-size:15px;color:#000;font-weight:400;font-family:'Liberation Sans', sans-serif;transform:scaleX(1.0648);">[gen.ent_desc]</span>
<span id="t76" class="t" style="left:1252px;top:730.60px;font-size:15px;color:#000;font-weight:400;font-family:'Liberation Sans', sans-serif;transform:scaleX(1.0530);">[gen.wo_id]</span>
<span id="t77" class="t" style="left:1389px;top:730.60px;font-size:15px;color:#000;font-weight:400;font-family:'Liberation Sans', sans-serif;transform:scaleX(1.0573);">[gen.oper_id]</span>
<div style="position:absolute;left:1504px;top:721px;width:171px;height:40px;overflow:hidden">
<span id="t78" class="t" style="left:1.8px;top:9.60px;font-size:15px;color:#000;font-weight:400;font-family:'Liberation Sans', sans-serif;transform:scaleX(1.062)">ertDate([gen.requested_date])]</span>
</div>
<div style="position:absolute;left:1675px;top:721px;width:124px;height:40px;overflow:hidden">
<span id="t79" class="t" style="left:-5px;top:9.60px;font-size:15px;color:#000;font-weight:400;font-family:'Liberation Sans', sans-serif;transform:scaleX(1.062)">n.sample_status_desc]</span>
</div>
<svg style="position:absolute;left:262px;top:726px;" width="31" height="30" viewBox="0 0 31 30"><path d="M1 8 L1 1 L8 1 M23 1 L30 1 L30 8 M1 22 L1 29 L8 29 M23 29 L30 29 L30 22" fill="none" stroke="#3a3a3a" stroke-width="1.8"/><path d="M15 9.5 L15 21.5 M9 15.5 L21 15.5" stroke="#000" stroke-width="2.6"/></svg>
<div style="position:absolute;left:695px;top:781px;width:1106px;height:43px;background:#fdf5e6;border:2px solid #111;border-bottom-width:3px;box-sizing:border-box"></div>
<div style="position:absolute;left:950px;top:781px;width:2px;height:43px;background:#111"></div>
<div style="position:absolute;left:1290px;top:781px;width:2px;height:43px;background:#111"></div>
<div style="position:absolute;left:1587px;top:781px;width:2px;height:43px;background:#111"></div>
<span id="t80" class="t" style="left:754.2px;top:791.61px;font-size:17px;color:#000;font-weight:700;font-family:'Liberation Sans', sans-serif;transform:scaleX(1.0526);">Характеристика</span>
<span id="t81" class="t" style="left:1000px;top:791.61px;font-size:17px;color:#000;font-weight:700;font-family:'Liberation Sans', sans-serif;transform:scaleX(1.0553);">Пределы по спецификации</span>
<span id="t82" class="t" style="left:1399.4px;top:791.61px;font-size:17px;color:#000;font-weight:700;font-family:'Liberation Sans', sans-serif;transform:scaleX(1.0382);">Важность</span>
<span id="t83" class="t" style="left:1596.2px;top:791.61px;font-size:17px;color:#000;font-weight:700;font-family:'Liberation Sans', sans-serif;transform:scaleX(1.0510);">Фактическое значение</span>
<div style="position:absolute;left:695px;top:829px;width:1106px;height:44px;border:2px solid #111;border-bottom-width:3px;box-sizing:border-box"></div>
<div style="position:absolute;left:950px;top:829px;width:2px;height:44px;background:#111"></div>
<div style="position:absolute;left:1290px;top:829px;width:2px;height:44px;background:#111"></div>
<div style="position:absolute;left:1587px;top:829px;width:2px;height:44px;background:#111"></div>
<span id="t84" class="t" style="left:766px;top:840.80px;font-size:15px;color:#000;font-weight:400;font-family:'Liberation Sans', sans-serif;transform:scaleX(1.0562);">[gen.char_name]</span>
<span id="t85" class="t" style="left:1054px;top:840.30px;font-size:15px;color:#000;font-weight:400;font-family:'Liberation Sans', sans-serif;transform:scaleX(1.0640);">[gen.lsv] - [gen.usv]</span>
<span id="t86" class="t" style="left:1617.3px;top:840.30px;font-size:15px;color:#000;font-weight:400;font-family:'Liberation Sans', sans-serif;transform:scaleX(1.0632);">[gen.act_sample_size]</span>
<div style="position:absolute;left:1292px;top:831px;width:295px;height:39px;overflow:hidden">
<span id="t87" class="t" style="left:56.200000000000045px;top:3.00px;font-size:15px;color:#000;font-weight:400;font-family:'Liberation Sans', sans-serif;transform:scaleX(1.0619);">[IIf([gen.severity_desc] !=</span>
<span id="t88" class="t" style="left:56.200000000000045px;top:27.00px;font-size:15px;color:#000;font-weight:400;font-family:'Liberation Sans', sans-serif;transform:scaleX(1.0575);">"" ,[gen.severity_desc] ,"-")]</span>
</div>
<span id="t89" class="t" style="left:250.3px;top:948.46px;font-size:16px;color:#858585;font-weight:400;font-family:'Liberation Sans', sans-serif;transform:scaleX(0.9979);">Сформировано на: [FormatDateTime([Date],"Short Date")] [FormatDateTime([Date],"Short Time")]</span>
<div style="position:absolute;left:241px;top:930px;width:6px;height:1.6px;background:#333"></div>
<div style="position:absolute;left:241px;top:930px;width:1.6px;height:6px;background:#333"></div>
<div style="position:absolute;left:241px;top:971.4px;width:6px;height:1.6px;background:#333"></div>
<div style="position:absolute;left:241px;top:967px;width:1.6px;height:6px;background:#333"></div>
<div style="position:absolute;left:986px;top:930px;width:6px;height:1.6px;background:#333"></div>
<div style="position:absolute;left:990.4px;top:930px;width:1.6px;height:6px;background:#333"></div>
<div style="position:absolute;left:986px;top:971.4px;width:6px;height:1.6px;background:#333"></div>
<div style="position:absolute;left:990.4px;top:967px;width:1.6px;height:6px;background:#333"></div>
<span id="t90" class="t" style="left:1594px;top:940.46px;font-size:16px;color:#222;font-weight:400;font-family:'Liberation Sans', sans-serif;transform:scaleX(0.9791);">Страница</span>
<span id="t91" class="t" style="left:1677px;top:940.46px;font-size:16px;color:#222;font-weight:400;font-family:'Liberation Sans', sans-serif;transform:scaleX(0.9726);">[Page]</span>
<span id="t92" class="t" style="left:1735px;top:940.46px;font-size:16px;color:#222;font-weight:400;font-family:'Liberation Sans', sans-serif;transform:scaleX(0.9827);">из</span>
<span id="t93" class="t" style="left:1762px;top:940.46px;font-size:16px;color:#222;font-weight:400;font-family:'Liberation Sans', sans-serif;transform:scaleX(0.9726);">[Page]</span>
<div style="position:absolute;left:1555.5px;top:930px;width:6px;height:1.6px;background:#333"></div>
<div style="position:absolute;left:1555.5px;top:930px;width:1.6px;height:6px;background:#333"></div>
<div style="position:absolute;left:1555.5px;top:971.4px;width:6px;height:1.6px;background:#333"></div>
<div style="position:absolute;left:1555.5px;top:967px;width:1.6px;height:6px;background:#333"></div>
<div style="position:absolute;left:1663px;top:930px;width:12px;height:1.6px;background:#333"></div>
<div style="position:absolute;left:1668.2px;top:930px;width:1.6px;height:6px;background:#333"></div>
<div style="position:absolute;left:1663px;top:971.4px;width:12px;height:1.6px;background:#333"></div>
<div style="position:absolute;left:1668.2px;top:967px;width:1.6px;height:6px;background:#333"></div>
<div style="position:absolute;left:1720px;top:930px;width:12px;height:1.6px;background:#333"></div>
<div style="position:absolute;left:1725.2px;top:930px;width:1.6px;height:6px;background:#333"></div>
<div style="position:absolute;left:1720px;top:971.4px;width:12px;height:1.6px;background:#333"></div>
<div style="position:absolute;left:1725.2px;top:967px;width:1.6px;height:6px;background:#333"></div>
<div style="position:absolute;left:1748px;top:930px;width:12px;height:1.6px;background:#333"></div>
<div style="position:absolute;left:1753.2px;top:930px;width:1.6px;height:6px;background:#333"></div>
<div style="position:absolute;left:1748px;top:971.4px;width:12px;height:1.6px;background:#333"></div>
<div style="position:absolute;left:1753.2px;top:967px;width:1.6px;height:6px;background:#333"></div>
<div style="position:absolute;left:1806px;top:930px;width:6px;height:1.6px;background:#333"></div>
<div style="position:absolute;left:1810.4px;top:930px;width:1.6px;height:6px;background:#333"></div>
<div style="position:absolute;left:1806px;top:971.4px;width:6px;height:1.6px;background:#333"></div>
<div style="position:absolute;left:1810.4px;top:967px;width:1.6px;height:6px;background:#333"></div>
</body></html>
